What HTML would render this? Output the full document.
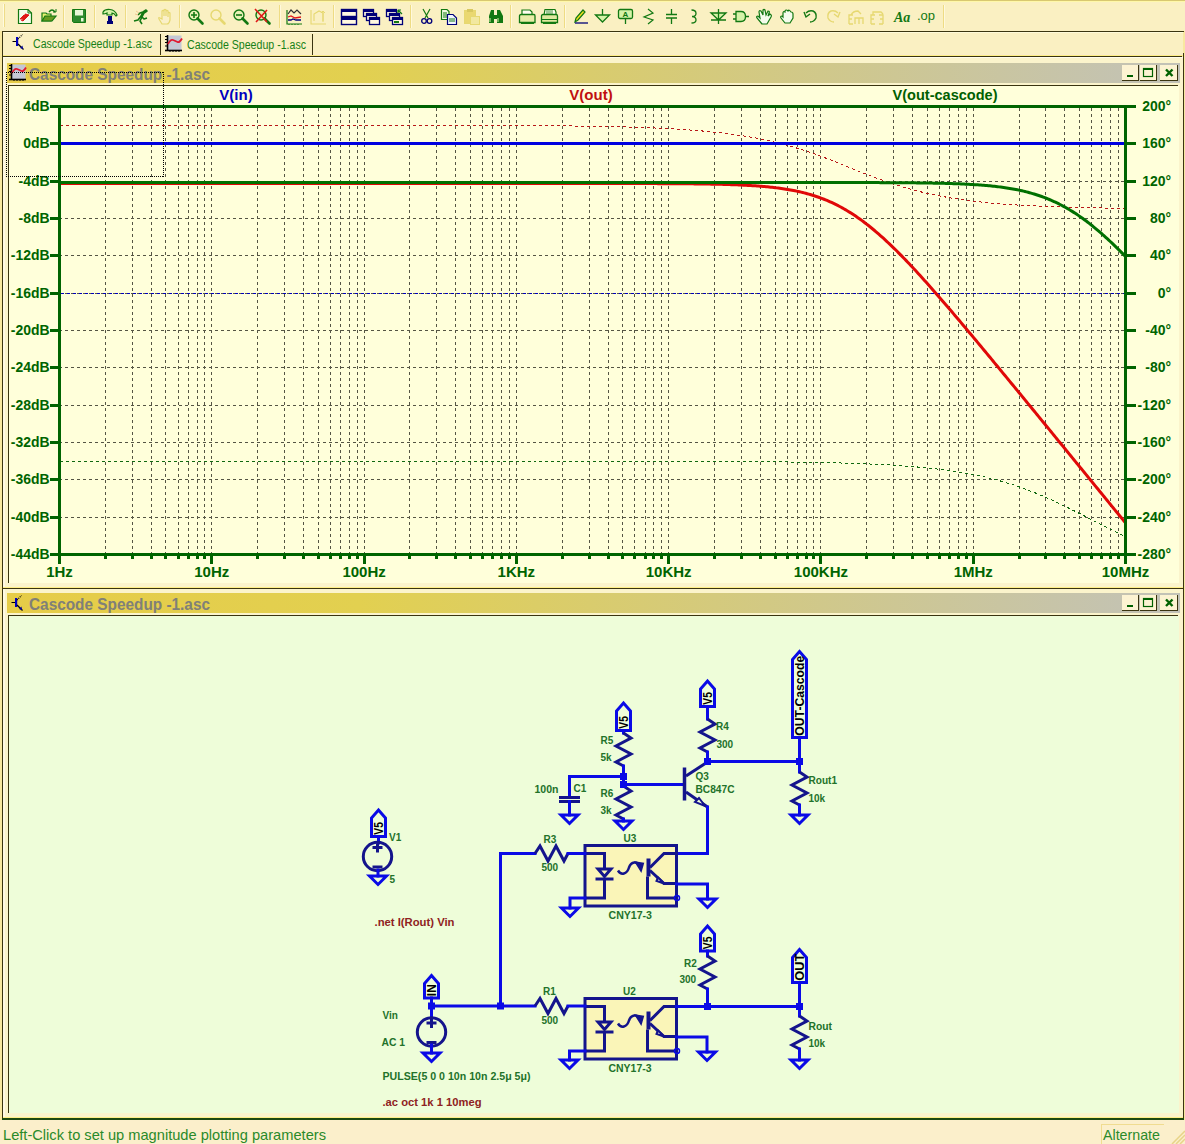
<!DOCTYPE html>
<html><head><meta charset="utf-8"><style>
html,body{margin:0;padding:0;overflow:hidden;background:#FBEFCB;}
svg{display:block;font-family:"Liberation Sans",sans-serif;}
</style></head><body>
<svg width="1185" height="1144" viewBox="0 0 1185 1144">
<defs>
<linearGradient id="tg" x1="0" x2="1" y1="0" y2="0">
<stop offset="0" stop-color="#E6CC48"/>
<stop offset="0.3" stop-color="#E2D050"/>
<stop offset="1" stop-color="#C2C2B8"/>
</linearGradient>
</defs>
<rect x="0" y="0" width="1185" height="1144" fill="#FBEFCB" />
<rect x="0" y="0" width="1185" height="31" fill="#FAF0C2" />
<rect x="0" y="0" width="1185" height="1" fill="#D8C870" />
<rect x="0" y="1" width="1185" height="1" fill="#FFF8A8" />
<rect x="3" y="4" width="1" height="23" fill="#FFFBE0" />
<rect x="4" y="4" width="1" height="23" fill="#EEDC88" />
<rect x="0" y="31" width="1185" height="1089" fill="#F8E8A0" />
<rect x="2" y="31" width="1182" height="1" fill="#3A3410" />
<rect x="2" y="31" width="1" height="1089" fill="#3A3410" />
<rect x="3" y="32" width="1180" height="24" fill="#FAF0C2" />
<rect x="3" y="54" width="1180" height="1" fill="#F8EACC" />
<rect x="3" y="55" width="1180" height="1" fill="#FFF088" />
<rect x="3" y="32" width="1180" height="1" fill="#FFFBDA" />
<rect x="2" y="56" width="1180" height="1" fill="#3A3410" />
<rect x="1183" y="53" width="1" height="1067" fill="#3A3410" />
<rect x="2" y="1118" width="1182" height="2" fill="#1E4A10" />
<rect x="3" y="57" width="1180" height="1061" fill="#FBF4CC" />
<rect x="3" y="57" width="2" height="1061" fill="#FFF9E4" />
<rect x="3" y="57" width="1180" height="1" fill="#FFFCEC" />
<rect x="3" y="587" width="1180" height="1" fill="#FFF088" />
<rect x="3" y="1117" width="1180" height="1" fill="#FFF088" />
<rect x="3" y="588" width="1180" height="1" fill="#3A3410" />
<rect x="7" y="63" width="1173" height="20" fill="url(#tg)"/>
<rect x="1122" y="65" width="17" height="16" fill="#FCF3D2" />
<rect x="1122" y="80" width="17" height="1" fill="#3A3410" />
<rect x="1138" y="65" width="1" height="16" fill="#3A3410" />
<rect x="1140" y="65" width="17" height="16" fill="#FCF3D2" />
<rect x="1140" y="80" width="17" height="1" fill="#3A3410" />
<rect x="1156" y="65" width="1" height="16" fill="#3A3410" />
<rect x="1160" y="65" width="18" height="16" fill="#FCF3D2" />
<rect x="1160" y="80" width="18" height="1" fill="#3A3410" />
<rect x="1177" y="65" width="1" height="16" fill="#3A3410" />
<rect x="1127" y="75" width="6" height="2" fill="#006000" />
<rect x="1143.5" y="68.5" width="9" height="8" fill="none" stroke="#006000" stroke-width="1.2"/>
<rect x="1143" y="68" width="10" height="2" fill="#006000" />
<path d="M1166 69.5 L1172.5 76 M1172.5 69.5 L1166 76" stroke="#006000" stroke-width="2.4"/>
<rect x="8" y="85" width="1170" height="1" fill="#3A3410" />
<rect x="8" y="85" width="1" height="498" fill="#3A3410" />
<rect x="9" y="86" width="1170" height="497" fill="#FFFFDA" />
<rect x="7" y="593" width="1173" height="20" fill="url(#tg)"/>
<rect x="1122" y="595" width="17" height="16" fill="#FCF3D2" />
<rect x="1122" y="610" width="17" height="1" fill="#3A3410" />
<rect x="1138" y="595" width="1" height="16" fill="#3A3410" />
<rect x="1140" y="595" width="17" height="16" fill="#FCF3D2" />
<rect x="1140" y="610" width="17" height="1" fill="#3A3410" />
<rect x="1156" y="595" width="1" height="16" fill="#3A3410" />
<rect x="1160" y="595" width="18" height="16" fill="#FCF3D2" />
<rect x="1160" y="610" width="18" height="1" fill="#3A3410" />
<rect x="1177" y="595" width="1" height="16" fill="#3A3410" />
<rect x="1127" y="605" width="6" height="2" fill="#006000" />
<rect x="1143.5" y="598.5" width="9" height="8" fill="none" stroke="#006000" stroke-width="1.2"/>
<rect x="1143" y="598" width="10" height="2" fill="#006000" />
<path d="M1166 599.5 L1172.5 606 M1172.5 599.5 L1166 606" stroke="#006000" stroke-width="2.4"/>
<rect x="8" y="615" width="1170" height="1" fill="#3A3410" />
<rect x="8" y="615" width="1" height="498" fill="#3A3410" />
<rect x="9" y="616" width="1170" height="497" fill="#EEFDD9" />
<text x="29" y="80" font-size="16" fill="#808078" font-weight="bold" text-anchor="start" textLength="181" lengthAdjust="spacingAndGlyphs" >Cascode Speedup -1.asc</text>
<text x="29" y="610" font-size="16" fill="#808078" font-weight="bold" text-anchor="start" textLength="181" lengthAdjust="spacingAndGlyphs" >Cascode Speedup -1.asc</text>
<text x="33" y="48" font-size="12" fill="#168016" font-weight="normal" text-anchor="start" textLength="119" lengthAdjust="spacingAndGlyphs" >Cascode Speedup -1.asc</text>
<rect x="160" y="34" width="1" height="21" fill="#3A3410" />
<text x="187" y="49" font-size="12" fill="#168016" font-weight="normal" text-anchor="start" textLength="119" lengthAdjust="spacingAndGlyphs" >Cascode Speedup -1.asc</text>
<rect x="312" y="34" width="1" height="21" fill="#3A3410" />
<g transform="translate(12,34)"><rect x="4" y="3" width="2.2" height="9" fill="#0000C0"/><path d="M0.5,7.5 H4" stroke="#000" stroke-width="1"/><path d="M6,5 L10.5,0.5" stroke="#000" stroke-width="1.2" stroke-dasharray="1 1"/><path d="M6,10 L11.5,15.5" stroke="#000" stroke-width="1.2"/><path d="M8,14 L10.5,11.5 L11,15 Z" fill="#0000A0"/></g>
<g transform="translate(165,35)"><rect x="2" y="0.5" width="14.5" height="15" fill="#C4C8D4"/><path d="M2.5,16 V0" stroke="#000" stroke-width="1.6"/><path d="M0,15.5 H17" stroke="#000" stroke-width="1.6"/><path d="M0,1.5 H2 M0,4.5 H2 M0,7.5 H2 M0,11 H2 M5,16 V17 M8,16 V17 M11,16 V17 M14,16 V17" stroke="#000" stroke-width="1"/><path d="M3,9 Q5.5,4 8,5 T12.5,7 T17,3.5" fill="none" stroke="#E01830" stroke-width="1.8"/></g>
<g transform="translate(9,64)"><rect x="2" y="0.5" width="14.5" height="15" fill="#C4C8D4"/><path d="M2.5,16 V0" stroke="#000" stroke-width="1.6"/><path d="M0,15.5 H17" stroke="#000" stroke-width="1.6"/><path d="M0,1.5 H2 M0,4.5 H2 M0,7.5 H2 M0,11 H2 M5,16 V17 M8,16 V17 M11,16 V17 M14,16 V17" stroke="#000" stroke-width="1"/><path d="M3,9 Q5.5,4 8,5 T12.5,7 T17,3.5" fill="none" stroke="#E01830" stroke-width="1.8"/></g>
<g transform="translate(11,595)"><rect x="4" y="3" width="2.2" height="9" fill="#0000C0"/><path d="M0.5,7.5 H4" stroke="#000" stroke-width="1"/><path d="M6,5 L10.5,0.5" stroke="#000" stroke-width="1.2" stroke-dasharray="1 1"/><path d="M6,10 L11.5,15.5" stroke="#000" stroke-width="1.2"/><path d="M8,14 L10.5,11.5 L11,15 Z" fill="#0000A0"/></g>
<text x="3" y="1140" font-size="14.5" fill="#2A8A2A" font-weight="normal" text-anchor="start" textLength="323" lengthAdjust="spacingAndGlyphs" >Left-Click to set up magnitude plotting parameters</text>
<rect x="1101" y="1124" width="63" height="1" fill="#F0DC90" />
<rect x="1101" y="1124" width="1" height="20" fill="#F0DC90" />
<text x="1103" y="1140" font-size="14.5" fill="#2A8A2A" font-weight="normal" text-anchor="start" textLength="57" lengthAdjust="spacingAndGlyphs" >Alternate</text>
<path d="M1172,1144 L1185,1131 M1176,1144 L1185,1135 M1180,1144 L1185,1139" stroke="#E8D488" stroke-width="1.5"/>
<path d="M105.5 108V553 M132.5 108V553 M151.5 108V553 M165.5 108V553 M178.5 108V553 M188.5 108V553 M197.5 108V553 M204.5 108V553 M211.5 108V553 M257.5 108V553 M284.5 108V553 M303.5 108V553 M318.5 108V553 M330.5 108V553 M340.5 108V553 M349.5 108V553 M357.5 108V553 M364.5 108V553 M409.5 108V553 M436.5 108V553 M455.5 108V553 M470.5 108V553 M482.5 108V553 M492.5 108V553 M501.5 108V553 M509.5 108V553 M516.5 108V553 M562.5 108V553 M589.5 108V553 M608.5 108V553 M622.5 108V553 M634.5 108V553 M645.5 108V553 M653.5 108V553 M661.5 108V553 M668.5 108V553 M714.5 108V553 M741.5 108V553 M760.5 108V553 M775.5 108V553 M787.5 108V553 M797.5 108V553 M806.5 108V553 M813.5 108V553 M820.5 108V553 M866.5 108V553 M893.5 108V553 M912.5 108V553 M927.5 108V553 M939.5 108V553 M949.5 108V553 M958.5 108V553 M966.5 108V553 M973.5 108V553 M1019.5 108V553 M1045.5 108V553 M1064.5 108V553 M1079.5 108V553 M1091.5 108V553 M1101.5 108V553 M1110.5 108V553 M1118.5 108V553 M1118.5 108V553 M1110.5 108V553 M1101.5 108V553 M59 143.5H1124 M59 181.5H1124 M59 218.5H1124 M59 255.5H1124 M59 293.5H1124 M59 330.5H1124 M59 367.5H1124 M59 405.5H1124 M59 442.5H1124 M59 479.5H1124 M59 517.5H1124" stroke="#555544" stroke-width="1" stroke-dasharray="3 3" fill="none"/>
<path d="M61 293.5H1124" stroke="#0000C0" stroke-width="1" stroke-dasharray="3 3"/>
<polyline points="59.50,125.17 61.02,125.17 62.55,125.17 64.07,125.17 65.59,125.17 67.11,125.17 68.64,125.17 70.16,125.17 71.68,125.17 73.21,125.17 74.73,125.17 76.25,125.17 77.77,125.17 79.30,125.17 80.82,125.17 82.34,125.17 83.87,125.17 85.39,125.17 86.91,125.17 88.43,125.17 89.96,125.17 91.48,125.17 93.00,125.17 94.53,125.17 96.05,125.17 97.57,125.17 99.09,125.17 100.62,125.17 102.14,125.17 103.66,125.17 105.19,125.17 106.71,125.17 108.23,125.17 109.75,125.17 111.28,125.17 112.80,125.17 114.32,125.17 115.85,125.17 117.37,125.17 118.89,125.17 120.41,125.17 121.94,125.17 123.46,125.17 124.98,125.17 126.51,125.17 128.03,125.17 129.55,125.17 131.07,125.17 132.60,125.17 134.12,125.17 135.64,125.17 137.17,125.17 138.69,125.17 140.21,125.17 141.73,125.17 143.26,125.17 144.78,125.17 146.30,125.17 147.83,125.17 149.35,125.17 150.87,125.17 152.39,125.17 153.92,125.17 155.44,125.17 156.96,125.17 158.49,125.17 160.01,125.17 161.53,125.17 163.05,125.17 164.58,125.17 166.10,125.17 167.62,125.17 169.15,125.17 170.67,125.17 172.19,125.17 173.71,125.17 175.24,125.17 176.76,125.17 178.28,125.17 179.81,125.17 181.33,125.17 182.85,125.17 184.37,125.17 185.90,125.17 187.42,125.17 188.94,125.17 190.47,125.17 191.99,125.17 193.51,125.17 195.03,125.17 196.56,125.17 198.08,125.17 199.60,125.17 201.13,125.17 202.65,125.17 204.17,125.17 205.69,125.17 207.22,125.17 208.74,125.17 210.26,125.17 211.79,125.17 213.31,125.17 214.83,125.17 216.35,125.17 217.88,125.17 219.40,125.17 220.92,125.17 222.45,125.17 223.97,125.17 225.49,125.17 227.01,125.17 228.54,125.17 230.06,125.17 231.58,125.17 233.11,125.17 234.63,125.17 236.15,125.17 237.67,125.17 239.20,125.17 240.72,125.17 242.24,125.17 243.77,125.17 245.29,125.17 246.81,125.17 248.33,125.17 249.86,125.17 251.38,125.17 252.90,125.17 254.43,125.17 255.95,125.17 257.47,125.17 258.99,125.17 260.52,125.17 262.04,125.17 263.56,125.17 265.09,125.17 266.61,125.17 268.13,125.17 269.65,125.18 271.18,125.18 272.70,125.18 274.22,125.18 275.75,125.18 277.27,125.18 278.79,125.18 280.31,125.18 281.84,125.18 283.36,125.18 284.88,125.18 286.41,125.18 287.93,125.18 289.45,125.18 290.97,125.18 292.50,125.18 294.02,125.18 295.54,125.18 297.07,125.18 298.59,125.18 300.11,125.18 301.63,125.18 303.16,125.18 304.68,125.18 306.20,125.18 307.73,125.18 309.25,125.18 310.77,125.18 312.29,125.18 313.82,125.18 315.34,125.18 316.86,125.18 318.39,125.18 319.91,125.18 321.43,125.19 322.95,125.19 324.48,125.19 326.00,125.19 327.52,125.19 329.05,125.19 330.57,125.19 332.09,125.19 333.61,125.19 335.14,125.19 336.66,125.19 338.18,125.19 339.71,125.19 341.23,125.19 342.75,125.19 344.27,125.19 345.80,125.19 347.32,125.19 348.84,125.19 350.37,125.20 351.89,125.20 353.41,125.20 354.93,125.20 356.46,125.20 357.98,125.20 359.50,125.20 361.03,125.20 362.55,125.20 364.07,125.20 365.59,125.20 367.12,125.20 368.64,125.20 370.16,125.21 371.69,125.21 373.21,125.21 374.73,125.21 376.25,125.21 377.78,125.21 379.30,125.21 380.82,125.21 382.35,125.21 383.87,125.21 385.39,125.22 386.91,125.22 388.44,125.22 389.96,125.22 391.48,125.22 393.01,125.22 394.53,125.22 396.05,125.22 397.57,125.23 399.10,125.23 400.62,125.23 402.14,125.23 403.67,125.23 405.19,125.23 406.71,125.23 408.23,125.24 409.76,125.24 411.28,125.24 412.80,125.24 414.33,125.24 415.85,125.24 417.37,125.25 418.89,125.25 420.42,125.25 421.94,125.25 423.46,125.25 424.99,125.26 426.51,125.26 428.03,125.26 429.55,125.26 431.08,125.26 432.60,125.27 434.12,125.27 435.65,125.27 437.17,125.27 438.69,125.28 440.21,125.28 441.74,125.28 443.26,125.28 444.78,125.29 446.31,125.29 447.83,125.29 449.35,125.29 450.87,125.30 452.40,125.30 453.92,125.30 455.44,125.31 456.97,125.31 458.49,125.31 460.01,125.32 461.53,125.32 463.06,125.32 464.58,125.33 466.10,125.33 467.63,125.34 469.15,125.34 470.67,125.34 472.19,125.35 473.72,125.35 475.24,125.36 476.76,125.36 478.29,125.36 479.81,125.37 481.33,125.37 482.85,125.38 484.38,125.38 485.90,125.39 487.42,125.39 488.95,125.40 490.47,125.40 491.99,125.41 493.51,125.42 495.04,125.42 496.56,125.43 498.08,125.43 499.61,125.44 501.13,125.45 502.65,125.45 504.17,125.46 505.70,125.47 507.22,125.47 508.74,125.48 510.27,125.49 511.79,125.49 513.31,125.50 514.83,125.51 516.36,125.52 517.88,125.53 519.40,125.54 520.93,125.54 522.45,125.55 523.97,125.56 525.49,125.57 527.02,125.58 528.54,125.59 530.06,125.60 531.59,125.61 533.11,125.62 534.63,125.63 536.15,125.64 537.68,125.65 539.20,125.66 540.72,125.68 542.25,125.69 543.77,125.70 545.29,125.71 546.81,125.72 548.34,125.74 549.86,125.75 551.38,125.76 552.91,125.78 554.43,125.79 555.95,125.81 557.47,125.82 559.00,125.84 560.52,125.85 562.04,125.87 563.57,125.88 565.09,125.90 566.61,125.92 568.13,125.94 569.66,125.95 571.18,125.97 572.70,125.99 574.23,126.01 575.75,126.03 577.27,126.05 578.79,126.07 580.32,126.09 581.84,126.11 583.36,126.14 584.89,126.16 586.41,126.18 587.93,126.20 589.45,126.23 590.98,126.25 592.50,126.28 594.02,126.30 595.55,126.33 597.07,126.36 598.59,126.39 600.11,126.41 601.64,126.44 603.16,126.47 604.68,126.50 606.21,126.54 607.73,126.57 609.25,126.60 610.77,126.63 612.30,126.67 613.82,126.70 615.34,126.74 616.87,126.77 618.39,126.81 619.91,126.85 621.43,126.89 622.96,126.93 624.48,126.97 626.00,127.01 627.53,127.06 629.05,127.10 630.57,127.14 632.09,127.19 633.62,127.24 635.14,127.29 636.66,127.33 638.19,127.39 639.71,127.44 641.23,127.49 642.75,127.54 644.28,127.60 645.80,127.66 647.32,127.71 648.85,127.77 650.37,127.83 651.89,127.90 653.41,127.96 654.94,128.02 656.46,128.09 657.98,128.16 659.51,128.23 661.03,128.30 662.55,128.37 664.07,128.45 665.60,128.52 667.12,128.60 668.64,128.68 670.17,128.76 671.69,128.84 673.21,128.93 674.73,129.02 676.26,129.11 677.78,129.20 679.30,129.29 680.83,129.39 682.35,129.49 683.87,129.59 685.39,129.69 686.92,129.79 688.44,129.90 689.96,130.01 691.49,130.12 693.01,130.24 694.53,130.35 696.05,130.47 697.58,130.60 699.10,130.72 700.62,130.85 702.15,130.98 703.67,131.12 705.19,131.25 706.71,131.39 708.24,131.54 709.76,131.69 711.28,131.84 712.81,131.99 714.33,132.15 715.85,132.31 717.37,132.47 718.90,132.64 720.42,132.81 721.94,132.99 723.47,133.17 724.99,133.35 726.51,133.54 728.03,133.73 729.56,133.92 731.08,134.12 732.60,134.33 734.13,134.54 735.65,134.75 737.17,134.97 738.69,135.19 740.22,135.42 741.74,135.65 743.26,135.89 744.79,136.14 746.31,136.38 747.83,136.64 749.35,136.90 750.88,137.16 752.40,137.43 753.92,137.71 755.45,137.99 756.97,138.27 758.49,138.57 760.01,138.87 761.54,139.17 763.06,139.48 764.58,139.80 766.11,140.12 767.63,140.45 769.15,140.79 770.67,141.13 772.20,141.48 773.72,141.84 775.24,142.20 776.77,142.57 778.29,142.94 779.81,143.33 781.33,143.72 782.86,144.12 784.38,144.52 785.90,144.93 787.43,145.35 788.95,145.77 790.47,146.21 791.99,146.65 793.52,147.09 795.04,147.55 796.56,148.01 798.09,148.48 799.61,148.95 801.13,149.43 802.65,149.92 804.18,150.42 805.70,150.92 807.22,151.43 808.75,151.94 810.27,152.46 811.79,152.99 813.31,153.53 814.84,154.07 816.36,154.61 817.88,155.16 819.41,155.72 820.93,156.28 822.45,156.85 823.97,157.43 825.50,158.00 827.02,158.59 828.54,159.17 830.07,159.76 831.59,160.36 833.11,160.95 834.63,161.55 836.16,162.16 837.68,162.76 839.20,163.37 840.73,163.98 842.25,164.59 843.77,165.21 845.29,165.82 846.82,166.44 848.34,167.05 849.86,167.67 851.39,168.28 852.91,168.90 854.43,169.51 855.95,170.13 857.48,170.74 859.00,171.35 860.52,171.95 862.05,172.56 863.57,173.16 865.09,173.76 866.61,174.35 868.14,174.94 869.66,175.53 871.18,176.12 872.71,176.70 874.23,177.27 875.75,177.84 877.27,178.40 878.80,178.96 880.32,179.52 881.84,180.07 883.37,180.61 884.89,181.15 886.41,181.68 887.93,182.20 889.46,182.72 890.98,183.23 892.50,183.73 894.03,184.23 895.55,184.72 897.07,185.21 898.59,185.68 900.12,186.15 901.64,186.62 903.16,187.07 904.69,187.52 906.21,187.96 907.73,188.40 909.25,188.83 910.78,189.25 912.30,189.66 913.82,190.07 915.35,190.47 916.87,190.86 918.39,191.25 919.91,191.63 921.44,192.00 922.96,192.36 924.48,192.72 926.01,193.07 927.53,193.42 929.05,193.76 930.57,194.09 932.10,194.42 933.62,194.74 935.14,195.05 936.67,195.36 938.19,195.66 939.71,195.95 941.23,196.24 942.76,196.52 944.28,196.80 945.80,197.07 947.33,197.34 948.85,197.60 950.37,197.86 951.89,198.11 953.42,198.35 954.94,198.59 956.46,198.83 957.99,199.06 959.51,199.28 961.03,199.50 962.55,199.72 964.08,199.93 965.60,200.13 967.12,200.34 968.65,200.53 970.17,200.73 971.69,200.92 973.21,201.10 974.74,201.28 976.26,201.46 977.78,201.63 979.31,201.80 980.83,201.97 982.35,202.13 983.87,202.29 985.40,202.44 986.92,202.59 988.44,202.74 989.97,202.89 991.49,203.03 993.01,203.17 994.53,203.30 996.06,203.43 997.58,203.56 999.10,203.69 1000.63,203.81 1002.15,203.94 1003.67,204.05 1005.19,204.17 1006.72,204.28 1008.24,204.39 1009.76,204.50 1011.29,204.61 1012.81,204.71 1014.33,204.81 1015.85,204.91 1017.38,205.01 1018.90,205.10 1020.42,205.19 1021.95,205.28 1023.47,205.37 1024.99,205.46 1026.51,205.54 1028.04,205.62 1029.56,205.70 1031.08,205.78 1032.61,205.86 1034.13,205.93 1035.65,206.01 1037.17,206.08 1038.70,206.15 1040.22,206.22 1041.74,206.29 1043.27,206.35 1044.79,206.41 1046.31,206.48 1047.83,206.54 1049.36,206.60 1050.88,206.66 1052.40,206.71 1053.93,206.77 1055.45,206.82 1056.97,206.88 1058.49,206.93 1060.02,206.98 1061.54,207.03 1063.06,207.08 1064.59,207.13 1066.11,207.17 1067.63,207.22 1069.15,207.26 1070.68,207.31 1072.20,207.35 1073.72,207.39 1075.25,207.43 1076.77,207.47 1078.29,207.51 1079.81,207.55 1081.34,207.58 1082.86,207.62 1084.38,207.65 1085.91,207.69 1087.43,207.72 1088.95,207.75 1090.47,207.79 1092.00,207.82 1093.52,207.85 1095.04,207.88 1096.57,207.91 1098.09,207.94 1099.61,207.96 1101.13,207.99 1102.66,208.02 1104.18,208.04 1105.70,208.07 1107.23,208.10 1108.75,208.12 1110.27,208.14 1111.79,208.17 1113.32,208.19 1114.84,208.21 1116.36,208.23 1117.89,208.25 1119.41,208.28 1120.93,208.30 1122.45,208.32 1123.98,208.33 1125.50,208.35" fill="none" stroke="#B81818" stroke-width="1" stroke-dasharray="3 3" shape-rendering="crispEdges" stroke-linejoin="round"/>
<polyline points="59.50,461.17 61.02,461.17 62.55,461.17 64.07,461.17 65.59,461.17 67.11,461.17 68.64,461.17 70.16,461.17 71.68,461.17 73.21,461.17 74.73,461.17 76.25,461.17 77.77,461.17 79.30,461.17 80.82,461.17 82.34,461.17 83.87,461.17 85.39,461.17 86.91,461.17 88.43,461.17 89.96,461.17 91.48,461.17 93.00,461.17 94.53,461.17 96.05,461.17 97.57,461.17 99.09,461.17 100.62,461.17 102.14,461.17 103.66,461.17 105.19,461.17 106.71,461.17 108.23,461.17 109.75,461.17 111.28,461.17 112.80,461.17 114.32,461.17 115.85,461.17 117.37,461.17 118.89,461.17 120.41,461.17 121.94,461.17 123.46,461.17 124.98,461.17 126.51,461.17 128.03,461.17 129.55,461.17 131.07,461.17 132.60,461.17 134.12,461.17 135.64,461.17 137.17,461.17 138.69,461.17 140.21,461.17 141.73,461.17 143.26,461.17 144.78,461.17 146.30,461.17 147.83,461.17 149.35,461.17 150.87,461.17 152.39,461.17 153.92,461.17 155.44,461.17 156.96,461.17 158.49,461.17 160.01,461.17 161.53,461.17 163.05,461.17 164.58,461.17 166.10,461.17 167.62,461.17 169.15,461.17 170.67,461.17 172.19,461.17 173.71,461.17 175.24,461.17 176.76,461.17 178.28,461.17 179.81,461.17 181.33,461.17 182.85,461.17 184.37,461.17 185.90,461.17 187.42,461.17 188.94,461.17 190.47,461.17 191.99,461.17 193.51,461.17 195.03,461.17 196.56,461.17 198.08,461.17 199.60,461.17 201.13,461.17 202.65,461.17 204.17,461.17 205.69,461.17 207.22,461.17 208.74,461.17 210.26,461.17 211.79,461.17 213.31,461.17 214.83,461.17 216.35,461.17 217.88,461.17 219.40,461.17 220.92,461.17 222.45,461.17 223.97,461.17 225.49,461.17 227.01,461.17 228.54,461.17 230.06,461.17 231.58,461.17 233.11,461.17 234.63,461.17 236.15,461.17 237.67,461.17 239.20,461.17 240.72,461.17 242.24,461.17 243.77,461.17 245.29,461.17 246.81,461.17 248.33,461.17 249.86,461.17 251.38,461.17 252.90,461.17 254.43,461.17 255.95,461.17 257.47,461.17 258.99,461.17 260.52,461.17 262.04,461.17 263.56,461.17 265.09,461.17 266.61,461.17 268.13,461.17 269.65,461.17 271.18,461.17 272.70,461.17 274.22,461.17 275.75,461.17 277.27,461.17 278.79,461.17 280.31,461.17 281.84,461.17 283.36,461.17 284.88,461.17 286.41,461.17 287.93,461.17 289.45,461.17 290.97,461.17 292.50,461.17 294.02,461.17 295.54,461.17 297.07,461.17 298.59,461.17 300.11,461.17 301.63,461.17 303.16,461.17 304.68,461.17 306.20,461.17 307.73,461.17 309.25,461.17 310.77,461.17 312.29,461.17 313.82,461.17 315.34,461.17 316.86,461.17 318.39,461.17 319.91,461.17 321.43,461.17 322.95,461.17 324.48,461.17 326.00,461.17 327.52,461.17 329.05,461.17 330.57,461.17 332.09,461.17 333.61,461.17 335.14,461.17 336.66,461.17 338.18,461.17 339.71,461.17 341.23,461.17 342.75,461.17 344.27,461.17 345.80,461.17 347.32,461.17 348.84,461.17 350.37,461.17 351.89,461.17 353.41,461.17 354.93,461.17 356.46,461.17 357.98,461.17 359.50,461.17 361.03,461.17 362.55,461.17 364.07,461.17 365.59,461.17 367.12,461.17 368.64,461.17 370.16,461.17 371.69,461.17 373.21,461.17 374.73,461.17 376.25,461.17 377.78,461.17 379.30,461.17 380.82,461.17 382.35,461.17 383.87,461.17 385.39,461.17 386.91,461.17 388.44,461.17 389.96,461.17 391.48,461.17 393.01,461.17 394.53,461.17 396.05,461.17 397.57,461.17 399.10,461.17 400.62,461.17 402.14,461.17 403.67,461.17 405.19,461.17 406.71,461.17 408.23,461.17 409.76,461.17 411.28,461.17 412.80,461.17 414.33,461.17 415.85,461.17 417.37,461.17 418.89,461.17 420.42,461.17 421.94,461.17 423.46,461.17 424.99,461.17 426.51,461.17 428.03,461.17 429.55,461.17 431.08,461.17 432.60,461.17 434.12,461.17 435.65,461.17 437.17,461.17 438.69,461.17 440.21,461.17 441.74,461.17 443.26,461.17 444.78,461.17 446.31,461.17 447.83,461.17 449.35,461.17 450.87,461.17 452.40,461.17 453.92,461.17 455.44,461.17 456.97,461.17 458.49,461.17 460.01,461.17 461.53,461.17 463.06,461.17 464.58,461.17 466.10,461.17 467.63,461.17 469.15,461.17 470.67,461.17 472.19,461.17 473.72,461.17 475.24,461.17 476.76,461.17 478.29,461.17 479.81,461.17 481.33,461.17 482.85,461.17 484.38,461.18 485.90,461.18 487.42,461.18 488.95,461.18 490.47,461.18 491.99,461.18 493.51,461.18 495.04,461.18 496.56,461.18 498.08,461.18 499.61,461.18 501.13,461.18 502.65,461.18 504.17,461.18 505.70,461.18 507.22,461.18 508.74,461.18 510.27,461.18 511.79,461.18 513.31,461.18 514.83,461.18 516.36,461.18 517.88,461.18 519.40,461.18 520.93,461.18 522.45,461.18 523.97,461.18 525.49,461.18 527.02,461.18 528.54,461.18 530.06,461.18 531.59,461.18 533.11,461.18 534.63,461.18 536.15,461.18 537.68,461.19 539.20,461.19 540.72,461.19 542.25,461.19 543.77,461.19 545.29,461.19 546.81,461.19 548.34,461.19 549.86,461.19 551.38,461.19 552.91,461.19 554.43,461.19 555.95,461.19 557.47,461.19 559.00,461.19 560.52,461.19 562.04,461.19 563.57,461.19 565.09,461.20 566.61,461.20 568.13,461.20 569.66,461.20 571.18,461.20 572.70,461.20 574.23,461.20 575.75,461.20 577.27,461.20 578.79,461.20 580.32,461.20 581.84,461.20 583.36,461.20 584.89,461.20 586.41,461.21 587.93,461.21 589.45,461.21 590.98,461.21 592.50,461.21 594.02,461.21 595.55,461.21 597.07,461.21 598.59,461.21 600.11,461.21 601.64,461.22 603.16,461.22 604.68,461.22 606.21,461.22 607.73,461.22 609.25,461.22 610.77,461.22 612.30,461.22 613.82,461.23 615.34,461.23 616.87,461.23 618.39,461.23 619.91,461.23 621.43,461.23 622.96,461.23 624.48,461.24 626.00,461.24 627.53,461.24 629.05,461.24 630.57,461.24 632.09,461.24 633.62,461.25 635.14,461.25 636.66,461.25 638.19,461.25 639.71,461.25 641.23,461.26 642.75,461.26 644.28,461.26 645.80,461.26 647.32,461.27 648.85,461.27 650.37,461.27 651.89,461.27 653.41,461.27 654.94,461.28 656.46,461.28 657.98,461.28 659.51,461.29 661.03,461.29 662.55,461.29 664.07,461.29 665.60,461.30 667.12,461.30 668.64,461.30 670.17,461.31 671.69,461.31 673.21,461.31 674.73,461.32 676.26,461.32 677.78,461.32 679.30,461.33 680.83,461.33 682.35,461.33 683.87,461.34 685.39,461.34 686.92,461.35 688.44,461.35 689.96,461.35 691.49,461.36 693.01,461.36 694.53,461.37 696.05,461.37 697.58,461.38 699.10,461.38 700.62,461.39 702.15,461.39 703.67,461.40 705.19,461.40 706.71,461.41 708.24,461.41 709.76,461.42 711.28,461.43 712.81,461.43 714.33,461.44 715.85,461.44 717.37,461.45 718.90,461.46 720.42,461.46 721.94,461.47 723.47,461.48 724.99,461.49 726.51,461.49 728.03,461.50 729.56,461.51 731.08,461.52 732.60,461.52 734.13,461.53 735.65,461.54 737.17,461.55 738.69,461.56 740.22,461.57 741.74,461.58 743.26,461.59 744.79,461.60 746.31,461.61 747.83,461.62 749.35,461.63 750.88,461.64 752.40,461.65 753.92,461.66 755.45,461.67 756.97,461.68 758.49,461.70 760.01,461.71 761.54,461.72 763.06,461.73 764.58,461.75 766.11,461.76 767.63,461.77 769.15,461.79 770.67,461.80 772.20,461.82 773.72,461.83 775.24,461.85 776.77,461.86 778.29,461.88 779.81,461.90 781.33,461.91 782.86,461.93 784.38,461.95 785.90,461.97 787.43,461.99 788.95,462.00 790.47,462.02 791.99,462.04 793.52,462.06 795.04,462.09 796.56,462.11 798.09,462.13 799.61,462.15 801.13,462.17 802.65,462.20 804.18,462.22 805.70,462.25 807.22,462.27 808.75,462.30 810.27,462.32 811.79,462.35 813.31,462.38 814.84,462.41 816.36,462.43 817.88,462.46 819.41,462.49 820.93,462.53 822.45,462.56 823.97,462.59 825.50,462.62 827.02,462.66 828.54,462.69 830.07,462.73 831.59,462.76 833.11,462.80 834.63,462.84 836.16,462.88 837.68,462.92 839.20,462.96 840.73,463.00 842.25,463.04 843.77,463.09 845.29,463.13 846.82,463.18 848.34,463.22 849.86,463.27 851.39,463.32 852.91,463.37 854.43,463.42 855.95,463.47 857.48,463.53 859.00,463.58 860.52,463.64 862.05,463.70 863.57,463.75 865.09,463.81 866.61,463.88 868.14,463.94 869.66,464.00 871.18,464.07 872.71,464.14 874.23,464.21 875.75,464.28 877.27,464.35 878.80,464.42 880.32,464.50 881.84,464.58 883.37,464.66 884.89,464.74 886.41,464.82 887.93,464.90 889.46,464.99 890.98,465.08 892.50,465.17 894.03,465.26 895.55,465.36 897.07,465.46 898.59,465.56 900.12,465.66 901.64,465.76 903.16,465.87 904.69,465.98 906.21,466.09 907.73,466.20 909.25,466.32 910.78,466.44 912.30,466.56 913.82,466.69 915.35,466.82 916.87,466.95 918.39,467.08 919.91,467.22 921.44,467.36 922.96,467.50 924.48,467.65 926.01,467.80 927.53,467.95 929.05,468.11 930.57,468.27 932.10,468.43 933.62,468.60 935.14,468.77 936.67,468.95 938.19,469.12 939.71,469.31 941.23,469.50 942.76,469.69 944.28,469.88 945.80,470.08 947.33,470.29 948.85,470.50 950.37,470.71 951.89,470.93 953.42,471.15 954.94,471.38 956.46,471.62 957.99,471.85 959.51,472.10 961.03,472.35 962.55,472.60 964.08,472.86 965.60,473.13 967.12,473.40 968.65,473.68 970.17,473.96 971.69,474.25 973.21,474.55 974.74,474.85 976.26,475.16 977.78,475.47 979.31,475.79 980.83,476.12 982.35,476.46 983.87,476.80 985.40,477.15 986.92,477.50 988.44,477.87 989.97,478.24 991.49,478.62 993.01,479.00 994.53,479.39 996.06,479.80 997.58,480.20 999.10,480.62 1000.63,481.04 1002.15,481.48 1003.67,481.92 1005.19,482.36 1006.72,482.82 1008.24,483.29 1009.76,483.76 1011.29,484.24 1012.81,484.73 1014.33,485.23 1015.85,485.74 1017.38,486.25 1018.90,486.77 1020.42,487.31 1021.95,487.85 1023.47,488.40 1024.99,488.95 1026.51,489.52 1028.04,490.09 1029.56,490.68 1031.08,491.27 1032.61,491.86 1034.13,492.47 1035.65,493.09 1037.17,493.71 1038.70,494.34 1040.22,494.98 1041.74,495.63 1043.27,496.28 1044.79,496.94 1046.31,497.61 1047.83,498.28 1049.36,498.96 1050.88,499.65 1052.40,500.35 1053.93,501.05 1055.45,501.75 1056.97,502.46 1058.49,503.18 1060.02,503.90 1061.54,504.63 1063.06,505.36 1064.59,506.10 1066.11,506.84 1067.63,507.59 1069.15,508.34 1070.68,509.09 1072.20,509.85 1073.72,510.60 1075.25,511.37 1076.77,512.13 1078.29,512.90 1079.81,513.66 1081.34,514.43 1082.86,515.20 1084.38,515.98 1085.91,516.75 1087.43,517.53 1088.95,518.30 1090.47,519.08 1092.00,519.86 1093.52,520.63 1095.04,521.41 1096.57,522.19 1098.09,522.96 1099.61,523.74 1101.13,524.52 1102.66,525.29 1104.18,526.07 1105.70,526.84 1107.23,527.61 1108.75,528.39 1110.27,529.16 1111.79,529.93 1113.32,530.71 1114.84,531.48 1116.36,532.25 1117.89,533.02 1119.41,533.79 1120.93,534.56 1122.45,535.33 1123.98,536.10 1125.50,536.87" fill="none" stroke="#106810" stroke-width="1" stroke-dasharray="3 3" shape-rendering="crispEdges" stroke-linejoin="round"/>
<rect x="61" y="142" width="1064" height="3" fill="#0000E0" />
<polyline points="59.50,183.50 61.02,183.50 62.55,183.50 64.07,183.50 65.59,183.50 67.11,183.50 68.64,183.50 70.16,183.50 71.68,183.50 73.21,183.50 74.73,183.50 76.25,183.50 77.77,183.50 79.30,183.50 80.82,183.50 82.34,183.50 83.87,183.50 85.39,183.50 86.91,183.50 88.43,183.50 89.96,183.50 91.48,183.50 93.00,183.50 94.53,183.50 96.05,183.50 97.57,183.50 99.09,183.50 100.62,183.50 102.14,183.50 103.66,183.50 105.19,183.50 106.71,183.50 108.23,183.50 109.75,183.50 111.28,183.50 112.80,183.50 114.32,183.50 115.85,183.50 117.37,183.50 118.89,183.50 120.41,183.50 121.94,183.50 123.46,183.50 124.98,183.50 126.51,183.50 128.03,183.50 129.55,183.50 131.07,183.50 132.60,183.50 134.12,183.50 135.64,183.50 137.17,183.50 138.69,183.50 140.21,183.50 141.73,183.50 143.26,183.50 144.78,183.50 146.30,183.50 147.83,183.50 149.35,183.50 150.87,183.50 152.39,183.50 153.92,183.50 155.44,183.50 156.96,183.50 158.49,183.50 160.01,183.50 161.53,183.50 163.05,183.50 164.58,183.50 166.10,183.50 167.62,183.50 169.15,183.50 170.67,183.50 172.19,183.50 173.71,183.50 175.24,183.50 176.76,183.50 178.28,183.50 179.81,183.50 181.33,183.50 182.85,183.50 184.37,183.50 185.90,183.50 187.42,183.50 188.94,183.50 190.47,183.50 191.99,183.50 193.51,183.50 195.03,183.50 196.56,183.50 198.08,183.50 199.60,183.50 201.13,183.50 202.65,183.50 204.17,183.50 205.69,183.50 207.22,183.50 208.74,183.50 210.26,183.50 211.79,183.50 213.31,183.50 214.83,183.50 216.35,183.50 217.88,183.50 219.40,183.50 220.92,183.50 222.45,183.50 223.97,183.50 225.49,183.50 227.01,183.50 228.54,183.50 230.06,183.50 231.58,183.50 233.11,183.50 234.63,183.50 236.15,183.50 237.67,183.50 239.20,183.50 240.72,183.50 242.24,183.50 243.77,183.50 245.29,183.50 246.81,183.50 248.33,183.50 249.86,183.50 251.38,183.50 252.90,183.50 254.43,183.50 255.95,183.50 257.47,183.50 258.99,183.50 260.52,183.50 262.04,183.50 263.56,183.50 265.09,183.50 266.61,183.50 268.13,183.50 269.65,183.50 271.18,183.50 272.70,183.50 274.22,183.50 275.75,183.50 277.27,183.50 278.79,183.50 280.31,183.50 281.84,183.50 283.36,183.50 284.88,183.50 286.41,183.50 287.93,183.50 289.45,183.50 290.97,183.50 292.50,183.50 294.02,183.50 295.54,183.50 297.07,183.50 298.59,183.50 300.11,183.50 301.63,183.50 303.16,183.50 304.68,183.50 306.20,183.50 307.73,183.50 309.25,183.50 310.77,183.50 312.29,183.50 313.82,183.50 315.34,183.50 316.86,183.50 318.39,183.50 319.91,183.50 321.43,183.50 322.95,183.50 324.48,183.50 326.00,183.50 327.52,183.50 329.05,183.50 330.57,183.50 332.09,183.50 333.61,183.50 335.14,183.50 336.66,183.50 338.18,183.50 339.71,183.50 341.23,183.50 342.75,183.50 344.27,183.50 345.80,183.50 347.32,183.50 348.84,183.50 350.37,183.50 351.89,183.50 353.41,183.50 354.93,183.50 356.46,183.50 357.98,183.50 359.50,183.50 361.03,183.50 362.55,183.50 364.07,183.50 365.59,183.50 367.12,183.50 368.64,183.50 370.16,183.50 371.69,183.50 373.21,183.50 374.73,183.50 376.25,183.50 377.78,183.50 379.30,183.50 380.82,183.50 382.35,183.50 383.87,183.50 385.39,183.50 386.91,183.50 388.44,183.50 389.96,183.50 391.48,183.50 393.01,183.50 394.53,183.50 396.05,183.50 397.57,183.50 399.10,183.50 400.62,183.50 402.14,183.50 403.67,183.50 405.19,183.50 406.71,183.50 408.23,183.50 409.76,183.50 411.28,183.50 412.80,183.50 414.33,183.50 415.85,183.50 417.37,183.50 418.89,183.50 420.42,183.50 421.94,183.50 423.46,183.50 424.99,183.50 426.51,183.50 428.03,183.50 429.55,183.50 431.08,183.50 432.60,183.50 434.12,183.50 435.65,183.50 437.17,183.50 438.69,183.50 440.21,183.50 441.74,183.50 443.26,183.50 444.78,183.50 446.31,183.50 447.83,183.50 449.35,183.50 450.87,183.50 452.40,183.50 453.92,183.50 455.44,183.50 456.97,183.50 458.49,183.50 460.01,183.50 461.53,183.50 463.06,183.50 464.58,183.50 466.10,183.50 467.63,183.50 469.15,183.50 470.67,183.50 472.19,183.50 473.72,183.50 475.24,183.50 476.76,183.50 478.29,183.50 479.81,183.50 481.33,183.50 482.85,183.50 484.38,183.50 485.90,183.50 487.42,183.50 488.95,183.50 490.47,183.50 491.99,183.50 493.51,183.50 495.04,183.50 496.56,183.50 498.08,183.50 499.61,183.50 501.13,183.50 502.65,183.50 504.17,183.50 505.70,183.50 507.22,183.50 508.74,183.50 510.27,183.50 511.79,183.50 513.31,183.50 514.83,183.50 516.36,183.50 517.88,183.50 519.40,183.50 520.93,183.50 522.45,183.50 523.97,183.50 525.49,183.50 527.02,183.50 528.54,183.50 530.06,183.50 531.59,183.50 533.11,183.50 534.63,183.50 536.15,183.50 537.68,183.50 539.20,183.50 540.72,183.50 542.25,183.50 543.77,183.50 545.29,183.50 546.81,183.50 548.34,183.50 549.86,183.50 551.38,183.51 552.91,183.51 554.43,183.51 555.95,183.51 557.47,183.51 559.00,183.51 560.52,183.51 562.04,183.51 563.57,183.51 565.09,183.51 566.61,183.51 568.13,183.51 569.66,183.51 571.18,183.51 572.70,183.51 574.23,183.51 575.75,183.51 577.27,183.51 578.79,183.51 580.32,183.51 581.84,183.51 583.36,183.51 584.89,183.51 586.41,183.51 587.93,183.52 589.45,183.52 590.98,183.52 592.50,183.52 594.02,183.52 595.55,183.52 597.07,183.52 598.59,183.52 600.11,183.52 601.64,183.52 603.16,183.52 604.68,183.53 606.21,183.53 607.73,183.53 609.25,183.53 610.77,183.53 612.30,183.53 613.82,183.53 615.34,183.53 616.87,183.54 618.39,183.54 619.91,183.54 621.43,183.54 622.96,183.54 624.48,183.55 626.00,183.55 627.53,183.55 629.05,183.55 630.57,183.56 632.09,183.56 633.62,183.56 635.14,183.56 636.66,183.57 638.19,183.57 639.71,183.57 641.23,183.58 642.75,183.58 644.28,183.58 645.80,183.59 647.32,183.59 648.85,183.60 650.37,183.60 651.89,183.61 653.41,183.61 654.94,183.62 656.46,183.62 657.98,183.63 659.51,183.63 661.03,183.64 662.55,183.65 664.07,183.65 665.60,183.66 667.12,183.67 668.64,183.68 670.17,183.68 671.69,183.69 673.21,183.70 674.73,183.71 676.26,183.72 677.78,183.73 679.30,183.74 680.83,183.75 682.35,183.76 683.87,183.78 685.39,183.79 686.92,183.80 688.44,183.82 689.96,183.83 691.49,183.85 693.01,183.86 694.53,183.88 696.05,183.90 697.58,183.92 699.10,183.94 700.62,183.96 702.15,183.98 703.67,184.00 705.19,184.03 706.71,184.05 708.24,184.08 709.76,184.10 711.28,184.13 712.81,184.16 714.33,184.19 715.85,184.22 717.37,184.26 718.90,184.29 720.42,184.33 721.94,184.37 723.47,184.41 724.99,184.45 726.51,184.50 728.03,184.54 729.56,184.59 731.08,184.64 732.60,184.70 734.13,184.75 735.65,184.81 737.17,184.87 738.69,184.93 740.22,185.00 741.74,185.07 743.26,185.14 744.79,185.22 746.31,185.30 747.83,185.38 749.35,185.47 750.88,185.56 752.40,185.65 753.92,185.75 755.45,185.85 756.97,185.96 758.49,186.07 760.01,186.19 761.54,186.31 763.06,186.44 764.58,186.57 766.11,186.71 767.63,186.86 769.15,187.01 770.67,187.17 772.20,187.33 773.72,187.50 775.24,187.68 776.77,187.87 778.29,188.07 779.81,188.27 781.33,188.48 782.86,188.70 784.38,188.93 785.90,189.17 787.43,189.42 788.95,189.67 790.47,189.94 791.99,190.22 793.52,190.51 795.04,190.82 796.56,191.13 798.09,191.46 799.61,191.80 801.13,192.15 802.65,192.51 804.18,192.89 805.70,193.29 807.22,193.69 808.75,194.12 810.27,194.56 811.79,195.01 813.31,195.48 814.84,195.96 816.36,196.47 817.88,196.99 819.41,197.52 820.93,198.08 822.45,198.65 823.97,199.24 825.50,199.85 827.02,200.48 828.54,201.13 830.07,201.80 831.59,202.49 833.11,203.20 834.63,203.92 836.16,204.67 837.68,205.44 839.20,206.23 840.73,207.05 842.25,207.88 843.77,208.73 845.29,209.61 846.82,210.51 848.34,211.42 849.86,212.36 851.39,213.33 852.91,214.31 854.43,215.31 855.95,216.34 857.48,217.39 859.00,218.45 860.52,219.54 862.05,220.65 863.57,221.78 865.09,222.93 866.61,224.11 868.14,225.30 869.66,226.51 871.18,227.74 872.71,228.99 874.23,230.26 875.75,231.54 877.27,232.85 878.80,234.17 880.32,235.51 881.84,236.87 883.37,238.24 884.89,239.64 886.41,241.04 887.93,242.47 889.46,243.90 890.98,245.36 892.50,246.83 894.03,248.31 895.55,249.80 897.07,251.31 898.59,252.84 900.12,254.37 901.64,255.92 903.16,257.48 904.69,259.05 906.21,260.64 907.73,262.23 909.25,263.83 910.78,265.45 912.30,267.07 913.82,268.71 915.35,270.35 916.87,272.00 918.39,273.66 919.91,275.33 921.44,277.01 922.96,278.69 924.48,280.38 926.01,282.08 927.53,283.79 929.05,285.50 930.57,287.22 932.10,288.95 933.62,290.68 935.14,292.41 936.67,294.16 938.19,295.90 939.71,297.66 941.23,299.41 942.76,301.18 944.28,302.94 945.80,304.71 947.33,306.49 948.85,308.27 950.37,310.05 951.89,311.84 953.42,313.63 954.94,315.42 956.46,317.21 957.99,319.01 959.51,320.82 961.03,322.62 962.55,324.43 964.08,326.24 965.60,328.05 967.12,329.87 968.65,331.68 970.17,333.50 971.69,335.32 973.21,337.15 974.74,338.97 976.26,340.80 977.78,342.63 979.31,344.46 980.83,346.29 982.35,348.13 983.87,349.96 985.40,351.80 986.92,353.64 988.44,355.48 989.97,357.32 991.49,359.16 993.01,361.00 994.53,362.84 996.06,364.69 997.58,366.53 999.10,368.38 1000.63,370.23 1002.15,372.08 1003.67,373.93 1005.19,375.78 1006.72,377.63 1008.24,379.48 1009.76,381.33 1011.29,383.18 1012.81,385.04 1014.33,386.89 1015.85,388.75 1017.38,390.60 1018.90,392.46 1020.42,394.31 1021.95,396.17 1023.47,398.03 1024.99,399.88 1026.51,401.74 1028.04,403.60 1029.56,405.46 1031.08,407.32 1032.61,409.18 1034.13,411.04 1035.65,412.90 1037.17,414.76 1038.70,416.62 1040.22,418.48 1041.74,420.34 1043.27,422.20 1044.79,424.06 1046.31,425.93 1047.83,427.79 1049.36,429.65 1050.88,431.51 1052.40,433.37 1053.93,435.24 1055.45,437.10 1056.97,438.96 1058.49,440.83 1060.02,442.69 1061.54,444.55 1063.06,446.42 1064.59,448.28 1066.11,450.15 1067.63,452.01 1069.15,453.87 1070.68,455.74 1072.20,457.60 1073.72,459.47 1075.25,461.33 1076.77,463.20 1078.29,465.06 1079.81,466.93 1081.34,468.79 1082.86,470.66 1084.38,472.52 1085.91,474.39 1087.43,476.25 1088.95,478.12 1090.47,479.98 1092.00,481.85 1093.52,483.71 1095.04,485.58 1096.57,487.44 1098.09,489.31 1099.61,491.18 1101.13,493.04 1102.66,494.91 1104.18,496.77 1105.70,498.64 1107.23,500.51 1108.75,502.37 1110.27,504.24 1111.79,506.10 1113.32,507.97 1114.84,509.84 1116.36,511.70 1117.89,513.57 1119.41,515.43 1120.93,517.30 1122.45,519.17 1123.98,521.03 1125.50,522.90" fill="none" stroke="#E00808" stroke-width="3" stroke-linejoin="round"/>
<polyline points="59.50,182.50 61.02,182.50 62.55,182.50 64.07,182.50 65.59,182.50 67.11,182.50 68.64,182.50 70.16,182.50 71.68,182.50 73.21,182.50 74.73,182.50 76.25,182.50 77.77,182.50 79.30,182.50 80.82,182.50 82.34,182.50 83.87,182.50 85.39,182.50 86.91,182.50 88.43,182.50 89.96,182.50 91.48,182.50 93.00,182.50 94.53,182.50 96.05,182.50 97.57,182.50 99.09,182.50 100.62,182.50 102.14,182.50 103.66,182.50 105.19,182.50 106.71,182.50 108.23,182.50 109.75,182.50 111.28,182.50 112.80,182.50 114.32,182.50 115.85,182.50 117.37,182.50 118.89,182.50 120.41,182.50 121.94,182.50 123.46,182.50 124.98,182.50 126.51,182.50 128.03,182.50 129.55,182.50 131.07,182.50 132.60,182.50 134.12,182.50 135.64,182.50 137.17,182.50 138.69,182.50 140.21,182.50 141.73,182.50 143.26,182.50 144.78,182.50 146.30,182.50 147.83,182.50 149.35,182.50 150.87,182.50 152.39,182.50 153.92,182.50 155.44,182.50 156.96,182.50 158.49,182.50 160.01,182.50 161.53,182.50 163.05,182.50 164.58,182.50 166.10,182.50 167.62,182.50 169.15,182.50 170.67,182.50 172.19,182.50 173.71,182.50 175.24,182.50 176.76,182.50 178.28,182.50 179.81,182.50 181.33,182.50 182.85,182.50 184.37,182.50 185.90,182.50 187.42,182.50 188.94,182.50 190.47,182.50 191.99,182.50 193.51,182.50 195.03,182.50 196.56,182.50 198.08,182.50 199.60,182.50 201.13,182.50 202.65,182.50 204.17,182.50 205.69,182.50 207.22,182.50 208.74,182.50 210.26,182.50 211.79,182.50 213.31,182.50 214.83,182.50 216.35,182.50 217.88,182.50 219.40,182.50 220.92,182.50 222.45,182.50 223.97,182.50 225.49,182.50 227.01,182.50 228.54,182.50 230.06,182.50 231.58,182.50 233.11,182.50 234.63,182.50 236.15,182.50 237.67,182.50 239.20,182.50 240.72,182.50 242.24,182.50 243.77,182.50 245.29,182.50 246.81,182.50 248.33,182.50 249.86,182.50 251.38,182.50 252.90,182.50 254.43,182.50 255.95,182.50 257.47,182.50 258.99,182.50 260.52,182.50 262.04,182.50 263.56,182.50 265.09,182.50 266.61,182.50 268.13,182.50 269.65,182.50 271.18,182.50 272.70,182.50 274.22,182.50 275.75,182.50 277.27,182.50 278.79,182.50 280.31,182.50 281.84,182.50 283.36,182.50 284.88,182.50 286.41,182.50 287.93,182.50 289.45,182.50 290.97,182.50 292.50,182.50 294.02,182.50 295.54,182.50 297.07,182.50 298.59,182.50 300.11,182.50 301.63,182.50 303.16,182.50 304.68,182.50 306.20,182.50 307.73,182.50 309.25,182.50 310.77,182.50 312.29,182.50 313.82,182.50 315.34,182.50 316.86,182.50 318.39,182.50 319.91,182.50 321.43,182.50 322.95,182.50 324.48,182.50 326.00,182.50 327.52,182.50 329.05,182.50 330.57,182.50 332.09,182.50 333.61,182.50 335.14,182.50 336.66,182.50 338.18,182.50 339.71,182.50 341.23,182.50 342.75,182.50 344.27,182.50 345.80,182.50 347.32,182.50 348.84,182.50 350.37,182.50 351.89,182.50 353.41,182.50 354.93,182.50 356.46,182.50 357.98,182.50 359.50,182.50 361.03,182.50 362.55,182.50 364.07,182.50 365.59,182.50 367.12,182.50 368.64,182.50 370.16,182.50 371.69,182.50 373.21,182.50 374.73,182.50 376.25,182.50 377.78,182.50 379.30,182.50 380.82,182.50 382.35,182.50 383.87,182.50 385.39,182.50 386.91,182.50 388.44,182.50 389.96,182.50 391.48,182.50 393.01,182.50 394.53,182.50 396.05,182.50 397.57,182.50 399.10,182.50 400.62,182.50 402.14,182.50 403.67,182.50 405.19,182.50 406.71,182.50 408.23,182.50 409.76,182.50 411.28,182.50 412.80,182.50 414.33,182.50 415.85,182.50 417.37,182.50 418.89,182.50 420.42,182.50 421.94,182.50 423.46,182.50 424.99,182.50 426.51,182.50 428.03,182.50 429.55,182.50 431.08,182.50 432.60,182.50 434.12,182.50 435.65,182.50 437.17,182.50 438.69,182.50 440.21,182.50 441.74,182.50 443.26,182.50 444.78,182.50 446.31,182.50 447.83,182.50 449.35,182.50 450.87,182.50 452.40,182.50 453.92,182.50 455.44,182.50 456.97,182.50 458.49,182.50 460.01,182.50 461.53,182.50 463.06,182.50 464.58,182.50 466.10,182.50 467.63,182.50 469.15,182.50 470.67,182.50 472.19,182.50 473.72,182.50 475.24,182.50 476.76,182.50 478.29,182.50 479.81,182.50 481.33,182.50 482.85,182.50 484.38,182.50 485.90,182.50 487.42,182.50 488.95,182.50 490.47,182.50 491.99,182.50 493.51,182.50 495.04,182.50 496.56,182.50 498.08,182.50 499.61,182.50 501.13,182.50 502.65,182.50 504.17,182.50 505.70,182.50 507.22,182.50 508.74,182.50 510.27,182.50 511.79,182.50 513.31,182.50 514.83,182.50 516.36,182.50 517.88,182.50 519.40,182.50 520.93,182.50 522.45,182.50 523.97,182.50 525.49,182.50 527.02,182.50 528.54,182.50 530.06,182.50 531.59,182.50 533.11,182.50 534.63,182.50 536.15,182.50 537.68,182.50 539.20,182.50 540.72,182.50 542.25,182.50 543.77,182.50 545.29,182.50 546.81,182.50 548.34,182.50 549.86,182.50 551.38,182.50 552.91,182.50 554.43,182.50 555.95,182.50 557.47,182.50 559.00,182.50 560.52,182.50 562.04,182.50 563.57,182.50 565.09,182.50 566.61,182.50 568.13,182.50 569.66,182.50 571.18,182.50 572.70,182.50 574.23,182.50 575.75,182.50 577.27,182.50 578.79,182.50 580.32,182.50 581.84,182.50 583.36,182.50 584.89,182.50 586.41,182.50 587.93,182.50 589.45,182.50 590.98,182.50 592.50,182.50 594.02,182.50 595.55,182.50 597.07,182.50 598.59,182.50 600.11,182.50 601.64,182.50 603.16,182.50 604.68,182.50 606.21,182.50 607.73,182.50 609.25,182.50 610.77,182.50 612.30,182.50 613.82,182.50 615.34,182.50 616.87,182.50 618.39,182.50 619.91,182.50 621.43,182.50 622.96,182.50 624.48,182.50 626.00,182.50 627.53,182.50 629.05,182.50 630.57,182.50 632.09,182.50 633.62,182.50 635.14,182.50 636.66,182.50 638.19,182.50 639.71,182.50 641.23,182.50 642.75,182.50 644.28,182.50 645.80,182.50 647.32,182.50 648.85,182.50 650.37,182.50 651.89,182.50 653.41,182.50 654.94,182.50 656.46,182.50 657.98,182.50 659.51,182.50 661.03,182.50 662.55,182.50 664.07,182.50 665.60,182.50 667.12,182.50 668.64,182.50 670.17,182.50 671.69,182.50 673.21,182.50 674.73,182.50 676.26,182.50 677.78,182.50 679.30,182.50 680.83,182.50 682.35,182.50 683.87,182.50 685.39,182.50 686.92,182.50 688.44,182.50 689.96,182.50 691.49,182.50 693.01,182.50 694.53,182.50 696.05,182.50 697.58,182.50 699.10,182.50 700.62,182.50 702.15,182.50 703.67,182.50 705.19,182.50 706.71,182.50 708.24,182.50 709.76,182.50 711.28,182.50 712.81,182.50 714.33,182.50 715.85,182.50 717.37,182.50 718.90,182.50 720.42,182.50 721.94,182.50 723.47,182.50 724.99,182.50 726.51,182.50 728.03,182.50 729.56,182.50 731.08,182.50 732.60,182.50 734.13,182.50 735.65,182.50 737.17,182.50 738.69,182.50 740.22,182.50 741.74,182.50 743.26,182.50 744.79,182.50 746.31,182.50 747.83,182.50 749.35,182.50 750.88,182.50 752.40,182.50 753.92,182.50 755.45,182.50 756.97,182.50 758.49,182.50 760.01,182.50 761.54,182.50 763.06,182.51 764.58,182.51 766.11,182.51 767.63,182.51 769.15,182.51 770.67,182.51 772.20,182.51 773.72,182.51 775.24,182.51 776.77,182.51 778.29,182.51 779.81,182.51 781.33,182.51 782.86,182.51 784.38,182.51 785.90,182.51 787.43,182.51 788.95,182.51 790.47,182.51 791.99,182.51 793.52,182.51 795.04,182.51 796.56,182.51 798.09,182.51 799.61,182.51 801.13,182.51 802.65,182.51 804.18,182.51 805.70,182.51 807.22,182.52 808.75,182.52 810.27,182.52 811.79,182.52 813.31,182.52 814.84,182.52 816.36,182.52 817.88,182.52 819.41,182.52 820.93,182.52 822.45,182.52 823.97,182.52 825.50,182.53 827.02,182.53 828.54,182.53 830.07,182.53 831.59,182.53 833.11,182.53 834.63,182.53 836.16,182.53 837.68,182.54 839.20,182.54 840.73,182.54 842.25,182.54 843.77,182.54 845.29,182.55 846.82,182.55 848.34,182.55 849.86,182.55 851.39,182.55 852.91,182.56 854.43,182.56 855.95,182.56 857.48,182.57 859.00,182.57 860.52,182.57 862.05,182.57 863.57,182.58 865.09,182.58 866.61,182.59 868.14,182.59 869.66,182.59 871.18,182.60 872.71,182.60 874.23,182.61 875.75,182.61 877.27,182.62 878.80,182.62 880.32,182.63 881.84,182.63 883.37,182.64 884.89,182.65 886.41,182.65 887.93,182.66 889.46,182.67 890.98,182.68 892.50,182.68 894.03,182.69 895.55,182.70 897.07,182.71 898.59,182.72 900.12,182.73 901.64,182.74 903.16,182.75 904.69,182.77 906.21,182.78 907.73,182.79 909.25,182.81 910.78,182.82 912.30,182.83 913.82,182.85 915.35,182.87 916.87,182.88 918.39,182.90 919.91,182.92 921.44,182.94 922.96,182.96 924.48,182.98 926.01,183.01 927.53,183.03 929.05,183.05 930.57,183.08 932.10,183.11 933.62,183.13 935.14,183.16 936.67,183.20 938.19,183.23 939.71,183.26 941.23,183.30 942.76,183.33 944.28,183.37 945.80,183.41 947.33,183.46 948.85,183.50 950.37,183.55 951.89,183.60 953.42,183.65 954.94,183.70 956.46,183.75 957.99,183.81 959.51,183.87 961.03,183.94 962.55,184.00 964.08,184.07 965.60,184.15 967.12,184.22 968.65,184.30 970.17,184.38 971.69,184.47 973.21,184.56 974.74,184.66 976.26,184.75 977.78,184.86 979.31,184.97 980.83,185.08 982.35,185.20 983.87,185.32 985.40,185.45 986.92,185.58 988.44,185.72 989.97,185.86 991.49,186.02 993.01,186.17 994.53,186.34 996.06,186.51 997.58,186.69 999.10,186.88 1000.63,187.07 1002.15,187.28 1003.67,187.49 1005.19,187.71 1006.72,187.94 1008.24,188.18 1009.76,188.43 1011.29,188.69 1012.81,188.96 1014.33,189.24 1015.85,189.53 1017.38,189.83 1018.90,190.14 1020.42,190.47 1021.95,190.81 1023.47,191.16 1024.99,191.53 1026.51,191.91 1028.04,192.30 1029.56,192.71 1031.08,193.13 1032.61,193.57 1034.13,194.03 1035.65,194.50 1037.17,194.98 1038.70,195.49 1040.22,196.01 1041.74,196.54 1043.27,197.10 1044.79,197.67 1046.31,198.27 1047.83,198.88 1049.36,199.51 1050.88,200.16 1052.40,200.83 1053.93,201.51 1055.45,202.22 1056.97,202.95 1058.49,203.70 1060.02,204.47 1061.54,205.26 1063.06,206.08 1064.59,206.91 1066.11,207.77 1067.63,208.64 1069.15,209.54 1070.68,210.46 1072.20,211.40 1073.72,212.36 1075.25,213.35 1076.77,214.35 1078.29,215.38 1079.81,216.43 1081.34,217.50 1082.86,218.59 1084.38,219.70 1085.91,220.83 1087.43,221.98 1088.95,223.15 1090.47,224.34 1092.00,225.55 1093.52,226.79 1095.04,228.04 1096.57,229.30 1098.09,230.59 1099.61,231.90 1101.13,233.22 1102.66,234.56 1104.18,235.92 1105.70,237.30 1107.23,238.69 1108.75,240.10 1110.27,241.52 1111.79,242.96 1113.32,244.41 1114.84,245.88 1116.36,247.37 1117.89,248.86 1119.41,250.37 1120.93,251.90 1122.45,253.43 1123.98,254.98 1125.50,256.54" fill="none" stroke="#007000" stroke-width="3" stroke-linejoin="round"/>
<rect x="58" y="105" width="3" height="459" fill="#006400" />
<rect x="1124" y="105" width="3" height="451" fill="#006400" />
<rect x="50" y="105" width="1086" height="3" fill="#006400" />
<rect x="50" y="553" width="1086" height="3" fill="#006400" />
<rect x="50" y="105" width="8" height="3" fill="#006400" />
<rect x="1127" y="105" width="9" height="3" fill="#006400" />
<text transform="translate(49.5,111) scale(0.93,1)" font-size="15" fill="#006400" font-weight="bold" text-anchor="end">4dB</text>
<text transform="translate(1171,111) scale(0.93,1)" font-size="15" fill="#006400" font-weight="bold" text-anchor="end">200°</text>
<rect x="50" y="142" width="8" height="3" fill="#006400" />
<rect x="1127" y="142" width="9" height="3" fill="#006400" />
<text transform="translate(49.5,148) scale(0.93,1)" font-size="15" fill="#006400" font-weight="bold" text-anchor="end">0dB</text>
<text transform="translate(1171,148) scale(0.93,1)" font-size="15" fill="#006400" font-weight="bold" text-anchor="end">160°</text>
<rect x="50" y="180" width="8" height="3" fill="#006400" />
<rect x="1127" y="180" width="9" height="3" fill="#006400" />
<text transform="translate(49.5,186) scale(0.93,1)" font-size="15" fill="#006400" font-weight="bold" text-anchor="end">-4dB</text>
<text transform="translate(1171,186) scale(0.93,1)" font-size="15" fill="#006400" font-weight="bold" text-anchor="end">120°</text>
<rect x="50" y="217" width="8" height="3" fill="#006400" />
<rect x="1127" y="217" width="9" height="3" fill="#006400" />
<text transform="translate(49.5,223) scale(0.93,1)" font-size="15" fill="#006400" font-weight="bold" text-anchor="end">-8dB</text>
<text transform="translate(1171,223) scale(0.93,1)" font-size="15" fill="#006400" font-weight="bold" text-anchor="end">80°</text>
<rect x="50" y="254" width="8" height="3" fill="#006400" />
<rect x="1127" y="254" width="9" height="3" fill="#006400" />
<text transform="translate(49.5,260) scale(0.93,1)" font-size="15" fill="#006400" font-weight="bold" text-anchor="end">-12dB</text>
<text transform="translate(1171,260) scale(0.93,1)" font-size="15" fill="#006400" font-weight="bold" text-anchor="end">40°</text>
<rect x="50" y="292" width="8" height="3" fill="#006400" />
<rect x="1127" y="292" width="9" height="3" fill="#006400" />
<text transform="translate(49.5,298) scale(0.93,1)" font-size="15" fill="#006400" font-weight="bold" text-anchor="end">-16dB</text>
<text transform="translate(1171,298) scale(0.93,1)" font-size="15" fill="#006400" font-weight="bold" text-anchor="end">0°</text>
<rect x="50" y="329" width="8" height="3" fill="#006400" />
<rect x="1127" y="329" width="9" height="3" fill="#006400" />
<text transform="translate(49.5,335) scale(0.93,1)" font-size="15" fill="#006400" font-weight="bold" text-anchor="end">-20dB</text>
<text transform="translate(1171,335) scale(0.93,1)" font-size="15" fill="#006400" font-weight="bold" text-anchor="end">-40°</text>
<rect x="50" y="366" width="8" height="3" fill="#006400" />
<rect x="1127" y="366" width="9" height="3" fill="#006400" />
<text transform="translate(49.5,372) scale(0.93,1)" font-size="15" fill="#006400" font-weight="bold" text-anchor="end">-24dB</text>
<text transform="translate(1171,372) scale(0.93,1)" font-size="15" fill="#006400" font-weight="bold" text-anchor="end">-80°</text>
<rect x="50" y="404" width="8" height="3" fill="#006400" />
<rect x="1127" y="404" width="9" height="3" fill="#006400" />
<text transform="translate(49.5,410) scale(0.93,1)" font-size="15" fill="#006400" font-weight="bold" text-anchor="end">-28dB</text>
<text transform="translate(1171,410) scale(0.93,1)" font-size="15" fill="#006400" font-weight="bold" text-anchor="end">-120°</text>
<rect x="50" y="441" width="8" height="3" fill="#006400" />
<rect x="1127" y="441" width="9" height="3" fill="#006400" />
<text transform="translate(49.5,447) scale(0.93,1)" font-size="15" fill="#006400" font-weight="bold" text-anchor="end">-32dB</text>
<text transform="translate(1171,447) scale(0.93,1)" font-size="15" fill="#006400" font-weight="bold" text-anchor="end">-160°</text>
<rect x="50" y="478" width="8" height="3" fill="#006400" />
<rect x="1127" y="478" width="9" height="3" fill="#006400" />
<text transform="translate(49.5,484) scale(0.93,1)" font-size="15" fill="#006400" font-weight="bold" text-anchor="end">-36dB</text>
<text transform="translate(1171,484) scale(0.93,1)" font-size="15" fill="#006400" font-weight="bold" text-anchor="end">-200°</text>
<rect x="50" y="516" width="8" height="3" fill="#006400" />
<rect x="1127" y="516" width="9" height="3" fill="#006400" />
<text transform="translate(49.5,522) scale(0.93,1)" font-size="15" fill="#006400" font-weight="bold" text-anchor="end">-40dB</text>
<text transform="translate(1171,522) scale(0.93,1)" font-size="15" fill="#006400" font-weight="bold" text-anchor="end">-240°</text>
<rect x="50" y="553" width="8" height="3" fill="#006400" />
<rect x="1127" y="553" width="9" height="3" fill="#006400" />
<text transform="translate(49.5,559) scale(0.93,1)" font-size="15" fill="#006400" font-weight="bold" text-anchor="end">-44dB</text>
<text transform="translate(1171,559) scale(0.93,1)" font-size="15" fill="#006400" font-weight="bold" text-anchor="end">-280°</text>
<rect x="58" y="556" width="3" height="8" fill="#006400" />
<rect x="104" y="556" width="3" height="3" fill="#006400" />
<rect x="131" y="556" width="3" height="3" fill="#006400" />
<rect x="150" y="556" width="3" height="3" fill="#006400" />
<rect x="164" y="556" width="3" height="3" fill="#006400" />
<rect x="177" y="556" width="3" height="3" fill="#006400" />
<rect x="187" y="556" width="3" height="3" fill="#006400" />
<rect x="196" y="556" width="3" height="3" fill="#006400" />
<rect x="203" y="556" width="3" height="3" fill="#006400" />
<rect x="210" y="556" width="3" height="8" fill="#006400" />
<rect x="256" y="556" width="3" height="3" fill="#006400" />
<rect x="283" y="556" width="3" height="3" fill="#006400" />
<rect x="302" y="556" width="3" height="3" fill="#006400" />
<rect x="317" y="556" width="3" height="3" fill="#006400" />
<rect x="329" y="556" width="3" height="3" fill="#006400" />
<rect x="339" y="556" width="3" height="3" fill="#006400" />
<rect x="348" y="556" width="3" height="3" fill="#006400" />
<rect x="356" y="556" width="3" height="3" fill="#006400" />
<rect x="363" y="556" width="3" height="8" fill="#006400" />
<rect x="408" y="556" width="3" height="3" fill="#006400" />
<rect x="435" y="556" width="3" height="3" fill="#006400" />
<rect x="454" y="556" width="3" height="3" fill="#006400" />
<rect x="469" y="556" width="3" height="3" fill="#006400" />
<rect x="481" y="556" width="3" height="3" fill="#006400" />
<rect x="491" y="556" width="3" height="3" fill="#006400" />
<rect x="500" y="556" width="3" height="3" fill="#006400" />
<rect x="508" y="556" width="3" height="3" fill="#006400" />
<rect x="515" y="556" width="3" height="8" fill="#006400" />
<rect x="561" y="556" width="3" height="3" fill="#006400" />
<rect x="588" y="556" width="3" height="3" fill="#006400" />
<rect x="607" y="556" width="3" height="3" fill="#006400" />
<rect x="621" y="556" width="3" height="3" fill="#006400" />
<rect x="633" y="556" width="3" height="3" fill="#006400" />
<rect x="644" y="556" width="3" height="3" fill="#006400" />
<rect x="652" y="556" width="3" height="3" fill="#006400" />
<rect x="660" y="556" width="3" height="3" fill="#006400" />
<rect x="667" y="556" width="3" height="8" fill="#006400" />
<rect x="713" y="556" width="3" height="3" fill="#006400" />
<rect x="740" y="556" width="3" height="3" fill="#006400" />
<rect x="759" y="556" width="3" height="3" fill="#006400" />
<rect x="774" y="556" width="3" height="3" fill="#006400" />
<rect x="786" y="556" width="3" height="3" fill="#006400" />
<rect x="796" y="556" width="3" height="3" fill="#006400" />
<rect x="805" y="556" width="3" height="3" fill="#006400" />
<rect x="812" y="556" width="3" height="3" fill="#006400" />
<rect x="819" y="556" width="3" height="8" fill="#006400" />
<rect x="865" y="556" width="3" height="3" fill="#006400" />
<rect x="892" y="556" width="3" height="3" fill="#006400" />
<rect x="911" y="556" width="3" height="3" fill="#006400" />
<rect x="926" y="556" width="3" height="3" fill="#006400" />
<rect x="938" y="556" width="3" height="3" fill="#006400" />
<rect x="948" y="556" width="3" height="3" fill="#006400" />
<rect x="957" y="556" width="3" height="3" fill="#006400" />
<rect x="965" y="556" width="3" height="3" fill="#006400" />
<rect x="972" y="556" width="3" height="8" fill="#006400" />
<rect x="1018" y="556" width="3" height="3" fill="#006400" />
<rect x="1044" y="556" width="3" height="3" fill="#006400" />
<rect x="1063" y="556" width="3" height="3" fill="#006400" />
<rect x="1078" y="556" width="3" height="3" fill="#006400" />
<rect x="1090" y="556" width="3" height="3" fill="#006400" />
<rect x="1100" y="556" width="3" height="3" fill="#006400" />
<rect x="1109" y="556" width="3" height="3" fill="#006400" />
<rect x="1117" y="556" width="3" height="3" fill="#006400" />
<rect x="1124" y="556" width="3" height="8" fill="#006400" />
<text x="59.5" y="577" font-size="15" fill="#006400" font-weight="bold" text-anchor="middle" >1Hz</text>
<text x="211.7857" y="577" font-size="15" fill="#006400" font-weight="bold" text-anchor="middle" >10Hz</text>
<text x="364.0714" y="577" font-size="15" fill="#006400" font-weight="bold" text-anchor="middle" >100Hz</text>
<text x="516.3571" y="577" font-size="15" fill="#006400" font-weight="bold" text-anchor="middle" >1KHz</text>
<text x="668.6428" y="577" font-size="15" fill="#006400" font-weight="bold" text-anchor="middle" >10KHz</text>
<text x="820.9285" y="577" font-size="15" fill="#006400" font-weight="bold" text-anchor="middle" >100KHz</text>
<text x="973.2141999999999" y="577" font-size="15" fill="#006400" font-weight="bold" text-anchor="middle" >1MHz</text>
<text x="1125.4999" y="577" font-size="15" fill="#006400" font-weight="bold" text-anchor="middle" >10MHz</text>
<text x="236" y="100" font-size="15" fill="#0000C0" font-weight="bold" text-anchor="middle" >V(in)</text>
<text x="591" y="100" font-size="15" fill="#C01010" font-weight="bold" text-anchor="middle" >V(out)</text>
<text x="945" y="100" font-size="15" fill="#006000" font-weight="bold" text-anchor="middle" textLength="105" lengthAdjust="spacingAndGlyphs" >V(out-cascode)</text>
<path d="M6 72.5H164M6 176.5H164M6.5 72V177M163.5 72V177" fill="none" stroke="#000" stroke-width="1" stroke-dasharray="1 1" shape-rendering="crispEdges"/>
<path d="M616.5,730.5 L616.5,711 L623.5,703 L630.5,711 L630.5,730.5 Z" fill="none" stroke="#0A0AE6" stroke-width="3" stroke-linejoin="miter"/>
<text transform="translate(627.5,728.7) rotate(-90)" font-size="12" font-weight="bold" fill="#000" textLength="12.6" lengthAdjust="spacingAndGlyphs">V5</text>
<path d="M623.5,730.5 L623.5,733" fill="none" stroke="#0A0AE6" stroke-width="3" stroke-linecap="square"/>
<path d="M623.5,733 L631.0,738 L616.0,746 L631.0,754 L616.0,762 L623.5,766" fill="none" stroke="#14148C" stroke-width="3" stroke-linecap="butt" stroke-linejoin="miter"/>
<path d="M623.5,766 L623.5,786" fill="none" stroke="#0A0AE6" stroke-width="3" stroke-linecap="square"/>
<path d="M623.5,786 L631.0,791 L616.0,799 L631.0,807 L616.0,815 L623.5,819" fill="none" stroke="#14148C" stroke-width="3" stroke-linecap="butt" stroke-linejoin="miter"/>
<path d="M623.5,819 L623.5,821" fill="none" stroke="#0A0AE6" stroke-width="3" stroke-linecap="square"/>
<path d="M615.0,821 L632.0,821 L623.5,829.5 Z" fill="none" stroke="#0A0AE6" stroke-width="3" stroke-linejoin="miter"/>
<rect x="620.0" y="773.0" width="7" height="7" fill="#0A0AE6"/>
<rect x="620.0" y="781.0" width="7" height="7" fill="#0A0AE6"/>
<path d="M623.5,776.5 L569.5,776.5 L569.5,797" fill="none" stroke="#0A0AE6" stroke-width="3" stroke-linecap="square"/>
<path d="M559,797.5 H580 M559,801.5 H580" fill="none" stroke="#14148C" stroke-width="3" stroke-linecap="butt" stroke-linejoin="miter"/>
<path d="M569.5,801.5 L569.5,815" fill="none" stroke="#0A0AE6" stroke-width="3" stroke-linecap="square"/>
<path d="M561.0,815 L578.0,815 L569.5,823.5 Z" fill="none" stroke="#0A0AE6" stroke-width="3" stroke-linejoin="miter"/>
<path d="M623.5,784.5 L684,784.5" fill="none" stroke="#0A0AE6" stroke-width="3" stroke-linecap="square"/>
<path d="M684.5,767.5 V800.5" fill="none" stroke="#14148C" stroke-width="3.5" stroke-linecap="butt" stroke-linejoin="miter"/>
<path d="M686,776 L707.5,762" fill="none" stroke="#14148C" stroke-width="3" stroke-linecap="butt" stroke-linejoin="miter"/>
<path d="M686,792 L707.5,807" fill="none" stroke="#14148C" stroke-width="3" stroke-linecap="butt" stroke-linejoin="miter"/>
<path d="M699,798 L695,802 L705,806 Z" fill="#EEFDD9" stroke="#14148C" stroke-width="2"/>
<path d="M700.5,706.5 L700.5,689 L707.5,681 L714.5,689 L714.5,706.5 Z" fill="none" stroke="#0A0AE6" stroke-width="3" stroke-linejoin="miter"/>
<text transform="translate(711.5,704.7) rotate(-90)" font-size="12" font-weight="bold" fill="#000" textLength="12.6" lengthAdjust="spacingAndGlyphs">V5</text>
<path d="M707.5,706.5 L707.5,719" fill="none" stroke="#0A0AE6" stroke-width="3" stroke-linecap="square"/>
<path d="M707.5,719 L715.0,724 L700.0,732 L715.0,740 L700.0,748 L707.5,752" fill="none" stroke="#14148C" stroke-width="3" stroke-linecap="butt" stroke-linejoin="miter"/>
<path d="M707.5,752 L707.5,761.5" fill="none" stroke="#0A0AE6" stroke-width="3" stroke-linecap="square"/>
<rect x="704.0" y="758.0" width="7" height="7" fill="#0A0AE6"/>
<path d="M707.5,761.5 L799.5,761.5" fill="none" stroke="#0A0AE6" stroke-width="3" stroke-linecap="square"/>
<rect x="796.0" y="758.0" width="7" height="7" fill="#0A0AE6"/>
<path d="M792.5,737.5 L792.5,659.5 L799.5,651.5 L806.5,659.5 L806.5,737.5 Z" fill="none" stroke="#0A0AE6" stroke-width="3" stroke-linejoin="miter"/>
<text transform="translate(803.5,735.7) rotate(-90)" font-size="12.5" font-weight="bold" fill="#000" textLength="80" lengthAdjust="spacingAndGlyphs">OUT-Cascode</text>
<path d="M799.5,737.5 L799.5,772" fill="none" stroke="#0A0AE6" stroke-width="3" stroke-linecap="square"/>
<path d="M799.5,772 L807.0,777 L792.0,785 L807.0,793 L792.0,801 L799.5,805" fill="none" stroke="#14148C" stroke-width="3" stroke-linecap="butt" stroke-linejoin="miter"/>
<path d="M799.5,805 L799.5,815" fill="none" stroke="#0A0AE6" stroke-width="3" stroke-linecap="square"/>
<path d="M791.0,815 L808.0,815 L799.5,823.5 Z" fill="none" stroke="#0A0AE6" stroke-width="3" stroke-linejoin="miter"/>
<path d="M707.5,807 L707.5,853.5 L664,853.5" fill="none" stroke="#0A0AE6" stroke-width="3" stroke-linecap="square"/>
<path d="M371.5,836.5 L371.5,818 L378.5,810 L385.5,818 L385.5,836.5 Z" fill="none" stroke="#0A0AE6" stroke-width="3" stroke-linejoin="miter"/>
<text transform="translate(382.5,834.7) rotate(-90)" font-size="12" font-weight="bold" fill="#000" textLength="12.6" lengthAdjust="spacingAndGlyphs">V5</text>
<path d="M378.5,836.5 L378.5,843" fill="none" stroke="#0A0AE6" stroke-width="3" stroke-linecap="square"/>
<circle cx="377.5" cy="856.5" r="14.2" fill="none" stroke="#14148C" stroke-width="3"/>
<path d="M372.5,847.5 H382.5 M377.5,843.5 V852.5" fill="none" stroke="#14148C" stroke-width="3" stroke-linecap="butt" stroke-linejoin="miter"/>
<path d="M372.5,867.0 H382.5" fill="none" stroke="#14148C" stroke-width="3" stroke-linecap="butt" stroke-linejoin="miter"/>
<path d="M378,870 L378,876" fill="none" stroke="#0A0AE6" stroke-width="3" stroke-linecap="square"/>
<path d="M369.5,876 L386.5,876 L378,884.5 Z" fill="none" stroke="#0A0AE6" stroke-width="3" stroke-linejoin="miter"/>
<rect x="585" y="845.5" width="91.5" height="60.5" fill="#FAF5B8" stroke="#14148C" stroke-width="3"/>
<path d="M585,853.5 H604.5 V868.5" fill="none" stroke="#14148C" stroke-width="3" stroke-linecap="butt" stroke-linejoin="miter"/>
<path d="M598,869.0 H611 L604.5,876.5 Z" fill="none" stroke="#14148C" stroke-width="3" stroke-linejoin="miter"/>
<path d="M595.5,879.0 H613.5 M604.5,878.5 V898.0 H585" fill="none" stroke="#14148C" stroke-width="3" stroke-linecap="butt" stroke-linejoin="miter"/>
<path d="M618,870.5 C621,875.5 627,874.5 629,867.5 C631,861.5 637,860.5 641,866.5" fill="none" stroke="#14148C" stroke-width="2.5" stroke-linecap="butt" stroke-linejoin="miter"/>
<path d="M636,862.5 L643,863.5 L641,870.5 Z" fill="#14148C" stroke="#14148C" stroke-width="2"/>
<path d="M648.5,858.5 V876.5" fill="none" stroke="#14148C" stroke-width="4" stroke-linecap="butt" stroke-linejoin="miter"/>
<path d="M647.5,876.5 V898.0 H676.5" fill="none" stroke="#14148C" stroke-width="3" stroke-linecap="butt" stroke-linejoin="miter"/>
<path d="M650,867.5 L664,853.5 H676.5" fill="none" stroke="#14148C" stroke-width="3" stroke-linecap="butt" stroke-linejoin="miter"/>
<path d="M650,870.5 L664,883.5 H676.5" fill="none" stroke="#14148C" stroke-width="3" stroke-linecap="butt" stroke-linejoin="miter"/>
<path d="M658,877.5 L664,883.5 L656.5,881.0 Z" fill="#FFF8E0" stroke="#14148C" stroke-width="2"/>
<circle cx="677" cy="898.0" r="2.5" fill="none" stroke="#0A0AE6" stroke-width="1.5"/>
<path d="M500.5,1006 L500.5,853.5 L535,853.5" fill="none" stroke="#0A0AE6" stroke-width="3" stroke-linecap="square"/>
<path d="M535,853.5 L540,846.0 L548,861.0 L556,846.0 L564,861.0 L568,853.5" fill="none" stroke="#14148C" stroke-width="3" stroke-linecap="butt" stroke-linejoin="miter"/>
<path d="M568,853.5 L585,853.5" fill="none" stroke="#0A0AE6" stroke-width="3" stroke-linecap="square"/>
<path d="M585,898 L570,898 L570,908" fill="none" stroke="#0A0AE6" stroke-width="3" stroke-linecap="square"/>
<path d="M561.5,908 L578.5,908 L570,916.5 Z" fill="none" stroke="#0A0AE6" stroke-width="3" stroke-linejoin="miter"/>
<path d="M676.5,884 L707.5,884 L707.5,899" fill="none" stroke="#0A0AE6" stroke-width="3" stroke-linecap="square"/>
<path d="M699.0,899 L716.0,899 L707.5,907.5 Z" fill="none" stroke="#0A0AE6" stroke-width="3" stroke-linejoin="miter"/>
<rect x="585" y="998.5" width="91.5" height="60.5" fill="#FAF5B8" stroke="#14148C" stroke-width="3"/>
<path d="M585,1006.5 H604.5 V1021.5" fill="none" stroke="#14148C" stroke-width="3" stroke-linecap="butt" stroke-linejoin="miter"/>
<path d="M598,1022.0 H611 L604.5,1029.5 Z" fill="none" stroke="#14148C" stroke-width="3" stroke-linejoin="miter"/>
<path d="M595.5,1032.0 H613.5 M604.5,1031.5 V1051.0 H585" fill="none" stroke="#14148C" stroke-width="3" stroke-linecap="butt" stroke-linejoin="miter"/>
<path d="M618,1023.5 C621,1028.5 627,1027.5 629,1020.5 C631,1014.5 637,1013.5 641,1019.5" fill="none" stroke="#14148C" stroke-width="2.5" stroke-linecap="butt" stroke-linejoin="miter"/>
<path d="M636,1015.5 L643,1016.5 L641,1023.5 Z" fill="#14148C" stroke="#14148C" stroke-width="2"/>
<path d="M648.5,1011.5 V1029.5" fill="none" stroke="#14148C" stroke-width="4" stroke-linecap="butt" stroke-linejoin="miter"/>
<path d="M647.5,1029.5 V1051.0 H676.5" fill="none" stroke="#14148C" stroke-width="3" stroke-linecap="butt" stroke-linejoin="miter"/>
<path d="M650,1020.5 L664,1006.5 H676.5" fill="none" stroke="#14148C" stroke-width="3" stroke-linecap="butt" stroke-linejoin="miter"/>
<path d="M650,1023.5 L664,1036.5 H676.5" fill="none" stroke="#14148C" stroke-width="3" stroke-linecap="butt" stroke-linejoin="miter"/>
<path d="M658,1030.5 L664,1036.5 L656.5,1034.0 Z" fill="#FFF8E0" stroke="#14148C" stroke-width="2"/>
<circle cx="677" cy="1051.0" r="2.5" fill="none" stroke="#0A0AE6" stroke-width="1.5"/>
<path d="M431.5,1006 L535,1006" fill="none" stroke="#0A0AE6" stroke-width="3" stroke-linecap="square"/>
<path d="M535,1006 L540,998.5 L548,1013.5 L556,998.5 L564,1013.5 L568,1006" fill="none" stroke="#14148C" stroke-width="3" stroke-linecap="butt" stroke-linejoin="miter"/>
<path d="M568,1006 L585,1006" fill="none" stroke="#0A0AE6" stroke-width="3" stroke-linecap="square"/>
<rect x="428.0" y="1002.5" width="7" height="7" fill="#0A0AE6"/>
<rect x="497.0" y="1002.5" width="7" height="7" fill="#0A0AE6"/>
<path d="M585,1051 L569.5,1051 L569.5,1060" fill="none" stroke="#0A0AE6" stroke-width="3" stroke-linecap="square"/>
<path d="M561.0,1060 L578.0,1060 L569.5,1068.5 Z" fill="none" stroke="#0A0AE6" stroke-width="3" stroke-linejoin="miter"/>
<path d="M676.5,1006.5 L799.5,1006.5" fill="none" stroke="#0A0AE6" stroke-width="3" stroke-linecap="square"/>
<rect x="704.0" y="1003.0" width="7" height="7" fill="#0A0AE6"/>
<rect x="796.0" y="1003.0" width="7" height="7" fill="#0A0AE6"/>
<path d="M676.5,1037 L707,1037 L707,1052" fill="none" stroke="#0A0AE6" stroke-width="3" stroke-linecap="square"/>
<path d="M698.5,1052 L715.5,1052 L707,1060.5 Z" fill="none" stroke="#0A0AE6" stroke-width="3" stroke-linejoin="miter"/>
<path d="M700.5,951 L700.5,934 L707.5,926 L714.5,934 L714.5,951 Z" fill="none" stroke="#0A0AE6" stroke-width="3" stroke-linejoin="miter"/>
<text transform="translate(711.5,949.2) rotate(-90)" font-size="12" font-weight="bold" fill="#000" textLength="12.6" lengthAdjust="spacingAndGlyphs">V5</text>
<path d="M707.5,951 L707.5,956" fill="none" stroke="#0A0AE6" stroke-width="3" stroke-linecap="square"/>
<path d="M707.5,956 L715.0,961 L700.0,969 L715.0,977 L700.0,985 L707.5,989" fill="none" stroke="#14148C" stroke-width="3" stroke-linecap="butt" stroke-linejoin="miter"/>
<path d="M707.5,989 L707.5,1006" fill="none" stroke="#0A0AE6" stroke-width="3" stroke-linecap="square"/>
<path d="M792.5,982.5 L792.5,957.5 L799.5,949.5 L806.5,957.5 L806.5,982.5 Z" fill="none" stroke="#0A0AE6" stroke-width="3" stroke-linejoin="miter"/>
<text transform="translate(803.5,980.7) rotate(-90)" font-size="12.5" font-weight="bold" fill="#000" textLength="27" lengthAdjust="spacingAndGlyphs">OUT</text>
<path d="M799.5,982.5 L799.5,1016" fill="none" stroke="#0A0AE6" stroke-width="3" stroke-linecap="square"/>
<path d="M799.5,1016 L807.0,1021 L792.0,1029 L807.0,1037 L792.0,1045 L799.5,1049" fill="none" stroke="#14148C" stroke-width="3" stroke-linecap="butt" stroke-linejoin="miter"/>
<path d="M799.5,1049 L799.5,1060" fill="none" stroke="#0A0AE6" stroke-width="3" stroke-linecap="square"/>
<path d="M791.0,1060 L808.0,1060 L799.5,1068.5 Z" fill="none" stroke="#0A0AE6" stroke-width="3" stroke-linejoin="miter"/>
<path d="M424.5,998 L424.5,983.5 L431.5,975.5 L438.5,983.5 L438.5,998 Z" fill="none" stroke="#0A0AE6" stroke-width="3" stroke-linejoin="miter"/>
<text transform="translate(435.5,996.2) rotate(-90)" font-size="12.5" font-weight="bold" fill="#000" textLength="12" lengthAdjust="spacingAndGlyphs">IN</text>
<path d="M431.5,998 L431.5,1018" fill="none" stroke="#0A0AE6" stroke-width="3" stroke-linecap="square"/>
<circle cx="431.5" cy="1032" r="14.2" fill="none" stroke="#14148C" stroke-width="3"/>
<path d="M426.5,1023 H436.5 M431.5,1019 V1028" fill="none" stroke="#14148C" stroke-width="3" stroke-linecap="butt" stroke-linejoin="miter"/>
<path d="M426.5,1042.5 H436.5" fill="none" stroke="#14148C" stroke-width="3" stroke-linecap="butt" stroke-linejoin="miter"/>
<path d="M431.5,1045 L431.5,1053" fill="none" stroke="#0A0AE6" stroke-width="3" stroke-linecap="square"/>
<path d="M423.0,1053 L440.0,1053 L431.5,1061.5 Z" fill="none" stroke="#0A0AE6" stroke-width="3" stroke-linejoin="miter"/>
<text x="600.5" y="744" font-size="10" font-weight="bold" fill="#22722A">R5</text>
<text x="600.5" y="761" font-size="10" font-weight="bold" fill="#22722A">5k</text>
<text x="600.5" y="797" font-size="10" font-weight="bold" fill="#22722A">R6</text>
<text x="600.5" y="814" font-size="10" font-weight="bold" fill="#22722A">3k</text>
<text x="573.5" y="792" font-size="10" font-weight="bold" fill="#22722A">C1</text>
<text x="534.5" y="792.5" font-size="10" font-weight="bold" fill="#22722A" textLength="24" lengthAdjust="spacingAndGlyphs">100n</text>
<text x="716" y="730" font-size="10" font-weight="bold" fill="#22722A">R4</text>
<text x="716.5" y="748" font-size="10" font-weight="bold" fill="#22722A">300</text>
<text x="695.5" y="780" font-size="10" font-weight="bold" fill="#22722A">Q3</text>
<text x="695.5" y="793" font-size="10" font-weight="bold" fill="#22722A" textLength="39" lengthAdjust="spacingAndGlyphs">BC847C</text>
<text x="808.5" y="784" font-size="10" font-weight="bold" fill="#22722A" textLength="28.5" lengthAdjust="spacingAndGlyphs">Rout1</text>
<text x="808.5" y="801.5" font-size="10" font-weight="bold" fill="#22722A">10k</text>
<text x="543.5" y="842.5" font-size="10" font-weight="bold" fill="#22722A">R3</text>
<text x="541.5" y="871" font-size="10" font-weight="bold" fill="#22722A">500</text>
<text x="623.5" y="841.5" font-size="10" font-weight="bold" fill="#22722A">U3</text>
<text x="608.5" y="918.5" font-size="10" font-weight="bold" fill="#22722A" textLength="43.5" lengthAdjust="spacingAndGlyphs">CNY17-3</text>
<text x="389" y="841" font-size="10" font-weight="bold" fill="#22722A">V1</text>
<text x="389.5" y="883" font-size="10" font-weight="bold" fill="#22722A">5</text>
<text x="374.5" y="926" font-size="10" font-weight="bold" fill="#8E2222" textLength="80" lengthAdjust="spacingAndGlyphs">.net I(Rout) Vin</text>
<text x="382.5" y="1018.5" font-size="10" font-weight="bold" fill="#22722A">Vin</text>
<text x="381.5" y="1045.5" font-size="10" font-weight="bold" fill="#22722A" textLength="23.5" lengthAdjust="spacingAndGlyphs">AC 1</text>
<text x="382.5" y="1079.5" font-size="10" font-weight="bold" fill="#22722A" textLength="148" lengthAdjust="spacingAndGlyphs">PULSE(5 0 0 10n 10n 2.5μ 5μ)</text>
<text x="382.5" y="1105.5" font-size="10" font-weight="bold" fill="#8E2222" textLength="99" lengthAdjust="spacingAndGlyphs">.ac oct 1k 1 10meg</text>
<text x="543" y="995" font-size="10" font-weight="bold" fill="#22722A">R1</text>
<text x="541.5" y="1024" font-size="10" font-weight="bold" fill="#22722A">500</text>
<text x="623" y="995" font-size="10" font-weight="bold" fill="#22722A">U2</text>
<text x="608.5" y="1071.5" font-size="10" font-weight="bold" fill="#22722A" textLength="43" lengthAdjust="spacingAndGlyphs">CNY17-3</text>
<text x="684" y="967" font-size="10" font-weight="bold" fill="#22722A">R2</text>
<text x="679.5" y="983" font-size="10" font-weight="bold" fill="#22722A">300</text>
<text x="808.5" y="1029.5" font-size="10" font-weight="bold" fill="#22722A" textLength="23.5" lengthAdjust="spacingAndGlyphs">Rout</text>
<text x="808.5" y="1046.5" font-size="10" font-weight="bold" fill="#22722A">10k</text>
<g transform="translate(18,9)"><path d="M0.5,0.5 H10 L13.5,4 V14.5 H0.5 Z" fill="#F4FCEC" stroke="#127812" stroke-width="1.2"/><path d="M10,0.5 V4 H13.5" fill="none" stroke="#127812" stroke-width="1"/><path d="M2,10 L6,6 H8 L7,5 L11,6 L9,8 H7 L8,9 Z M3,11 L5,12 L9,8" fill="#E01818" stroke="#E01818" stroke-width="1"/></g>
<g transform="translate(41,9)"><path d="M1,4 H5 L6,5 H10 V12 H1 Z" fill="#E8F070" stroke="#127812" stroke-width="1.2"/><path d="M1,12 L4,7 H15 L11,12 Z" fill="#6A9A20" stroke="#127812" stroke-width="1.2"/><path d="M8,3 Q11,-1 14,3" fill="none" stroke="#127812" stroke-width="1.3"/><path d="M12,3 H15 V0" fill="none" stroke="#127812" stroke-width="1"/></g>
<rect x="63" y="5" width="1" height="23" fill="#EEDC84"/><rect x="64" y="5" width="1" height="23" fill="#FFF9DC"/>
<rect x="94" y="5" width="1" height="23" fill="#EEDC84"/><rect x="95" y="5" width="1" height="23" fill="#FFF9DC"/>
<rect x="125" y="5" width="1" height="23" fill="#EEDC84"/><rect x="126" y="5" width="1" height="23" fill="#FFF9DC"/>
<rect x="179" y="5" width="1" height="23" fill="#EEDC84"/><rect x="180" y="5" width="1" height="23" fill="#FFF9DC"/>
<rect x="279" y="5" width="1" height="23" fill="#EEDC84"/><rect x="280" y="5" width="1" height="23" fill="#FFF9DC"/>
<rect x="333" y="5" width="1" height="23" fill="#EEDC84"/><rect x="334" y="5" width="1" height="23" fill="#FFF9DC"/>
<rect x="410" y="5" width="1" height="23" fill="#EEDC84"/><rect x="411" y="5" width="1" height="23" fill="#FFF9DC"/>
<rect x="510" y="5" width="1" height="23" fill="#EEDC84"/><rect x="511" y="5" width="1" height="23" fill="#FFF9DC"/>
<rect x="564" y="5" width="1" height="23" fill="#EEDC84"/><rect x="565" y="5" width="1" height="23" fill="#FFF9DC"/>
<rect x="943" y="5" width="1" height="23" fill="#EEDC84"/><rect x="944" y="5" width="1" height="23" fill="#FFF9DC"/>
<g transform="translate(72,9)"><path d="M0.5,0.5 H13.5 V13.5 H1.5 L0.5,12.5 Z" fill="#2E8A2E" stroke="#127812" stroke-width="1"/><rect x="3" y="1" width="8" height="5.5" fill="#E8F8D8"/><rect x="9" y="9" width="2.5" height="3.5" fill="#E8F8D8"/></g>
<g transform="translate(102,9)"><path d="M1,3 Q3,0 8,0.5 Q13,1 15,6 L14,7 Q12,4 10,4 V6 H5 V4 Q3,5 1,5 Z" fill="#D6F2A8" stroke="#127812" stroke-width="1.2"/><rect x="6" y="7" width="4" height="8" fill="#000078"/><rect x="5" y="12" width="6" height="3" fill="#000078"/></g>
<g transform="translate(133,9)"><path d="M1,12 L5,11 L8,7 L10,3 L13,1 L14,2 L11,4 L9,8 L11,10 L14,9 M9,8 L7,12 L9,15 M10,3 L7,4 L5,6" fill="none" stroke="#127812" stroke-width="1.6" stroke-linejoin="round"/><path d="M3,2 L6,4 M2,5 L5,6" stroke="#F0C890" stroke-width="1"/></g>
<g transform="translate(157,9)"><path d="M5,15 L2,10 Q1,8 3,9 L5,10 V2 Q6,1 7,2 V7 V1 Q8,0 9,1 V7 V2 Q10,1 11,2 V8 V4 Q12,3 13,4 V11 Q12,15 10,15 Z" fill="#FAF0C8" stroke="#E6D870" stroke-width="1.2"/></g>
<g transform="translate(188,9)"><circle cx="6" cy="6" r="5" fill="#D6F2A8" fill-opacity="0.5" stroke="#127812" stroke-width="1.4"/><path d="M9.5,9.5 L14.5,14.5" stroke="#127812" stroke-width="2.6" stroke-linecap="round"/><path d="M3,6 H9 M6,3 V9" stroke="#127812" stroke-width="1.6"/></g>
<g transform="translate(210,9)"><circle cx="6" cy="6" r="5" fill="none" fill-opacity="0.5" stroke="#E6D870" stroke-width="1.4"/><path d="M9.5,9.5 L14.5,14.5" stroke="#E6D870" stroke-width="2.6" stroke-linecap="round"/></g>
<g transform="translate(233,9)"><circle cx="6" cy="6" r="5" fill="#D6F2A8" fill-opacity="0.5" stroke="#127812" stroke-width="1.4"/><path d="M9.5,9.5 L14.5,14.5" stroke="#127812" stroke-width="2.6" stroke-linecap="round"/><path d="M3,6 H9" stroke="#127812" stroke-width="1.6"/></g>
<g transform="translate(255,9)"><circle cx="6" cy="6" r="5" fill="#D6F2A8" fill-opacity="0.5" stroke="#127812" stroke-width="1.4"/><path d="M9.5,9.5 L14.5,14.5" stroke="#127812" stroke-width="2.6" stroke-linecap="round"/><path d="M0,0 L12,13 M12,1 L1,13" stroke="#E01818" stroke-width="1.6"/></g>
<g transform="translate(286,9)"><path d="M1,1 V15 H16" fill="none" stroke="#127812" stroke-width="1.2"/><path d="M2,5 L5,1 L8,4 L11,1 L15,5" fill="none" stroke="#303030" stroke-width="1.2"/><path d="M2,8 L5,7 L9,9 L15,8" fill="none" stroke="#E01818" stroke-width="1.3"/><path d="M2,11 H5 L7,10 L10,11 H15" fill="none" stroke="#000078" stroke-width="1.3"/><path d="M3,15 V16 M6,15 V16 M9,15 V16 M12,15 V16" stroke="#127812" stroke-width="1"/></g>
<g transform="translate(310,9)"><path d="M1,1 V15 H16 M4,12 V5 L9,2 L13,4 V12" fill="none" stroke="#E6D870" stroke-width="1.1"/><path d="M13,2 V13 M11,4 L13,2 L15,4" fill="none" stroke="#E6D870" stroke-width="1"/></g>
<g transform="translate(341,9)"><rect x="0.5" y="0.5" width="15" height="7" fill="#FFF8E0" stroke="#000078" stroke-width="1.4"/><rect x="1" y="1" width="14" height="2" fill="#000078"/><rect x="0.5" y="8.5" width="15" height="7" fill="#FFF8E0" stroke="#000078" stroke-width="1.4"/><rect x="1" y="9" width="14" height="2" fill="#000078"/></g>
<g transform="translate(363,9)"><rect x="0.5" y="0.5" width="10" height="7" fill="#FFF8E0" stroke="#000078" stroke-width="1.3"/><rect x="1" y="1" width="9" height="2" fill="#000078"/><rect x="3.5" y="4.5" width="10" height="7" fill="#FFF8E0" stroke="#000078" stroke-width="1.3"/><rect x="4" y="5" width="9" height="2" fill="#000078"/><rect x="6.5" y="8.5" width="10" height="7" fill="#FFF8E0" stroke="#000078" stroke-width="1.3"/><rect x="7" y="9" width="9" height="2" fill="#000078"/></g>
<g transform="translate(386,9)"><rect x="0.5" y="0.5" width="10" height="7" fill="#FFF8E0" stroke="#000078" stroke-width="1.3"/><rect x="1" y="1" width="9" height="2" fill="#000078"/><rect x="3.5" y="4.5" width="10" height="7" fill="#FFF8E0" stroke="#000078" stroke-width="1.3"/><rect x="4" y="5" width="9" height="2" fill="#000078"/><rect x="6.5" y="8.5" width="10" height="7" fill="#FFF8E0" stroke="#000078" stroke-width="1.3"/><rect x="7" y="9" width="9" height="2" fill="#000078"/><path d="M16,5 L12,1 M12,1 H15 M12,1 V4" stroke="#127812" stroke-width="1.2" fill="none"/><rect x="8" y="12" width="5" height="2" fill="#127812"/></g>
<g transform="translate(421,9)"><path d="M2,0 L7,9 M9,0 L4,9" stroke="#127812" stroke-width="1.2"/><circle cx="3" cy="12" r="2.3" fill="none" stroke="#000078" stroke-width="1.3"/><circle cx="8.5" cy="12" r="2.3" fill="none" stroke="#000078" stroke-width="1.3"/></g>
<g transform="translate(441,9)"><path d="M0.5,0.5 H6 L8,2.5 V10.5 H0.5 Z" fill="#F0FCE0" stroke="#127812" stroke-width="1.2"/><path d="M2,4 H6 M2,6 H6 M2,8 H6" stroke="#127812" stroke-width="1"/><path d="M6.5,5.5 H12 L15.5,9 V15.5 H6.5 Z" fill="#F0F4FF" stroke="#000078" stroke-width="1.2"/><path d="M8,10 H14 M8,12 H14" stroke="#127812" stroke-width="1"/></g>
<g transform="translate(464,9)"><rect x="0.5" y="1.5" width="11" height="13" fill="#EAD870" stroke="#E6D870" stroke-width="1"/><rect x="3" y="0" width="6" height="3" fill="#D8C860"/><rect x="6.5" y="7.5" width="9" height="8" fill="#F2E8A0" stroke="#E6D870" stroke-width="1"/></g>
<g transform="translate(488,9)"><path d="M1,14 V7 L3,1 H6 V14 Z M9,14 V1 H12 L15,7 V14 Z M6,6 H9 V10 H6 Z" fill="#127812"/><path d="M2,9 V13 M10,9 V13" stroke="#D6F2A8" stroke-width="1"/></g>
<g transform="translate(519,9)"><path d="M3,1 H11 L13,3 V7 H3 Z" fill="#FFFDF0" stroke="#127812" stroke-width="1.2"/><path d="M0.5,7 Q0.5,5.5 2,5.5 H15 Q16,5.5 16,7 V13.5 H0.5 Z" fill="#E8ECA8" stroke="#127812" stroke-width="1.3"/><path d="M2,14.5 H15" stroke="#127812" stroke-width="1"/></g>
<g transform="translate(541,9)"><path d="M4,0.5 H14 L15,3 V6 H3 Z" fill="#FFFDF0" stroke="#127812" stroke-width="1.2"/><path d="M5,2 H12 M5,4 H12" stroke="#127812" stroke-width="0.8"/><path d="M0.5,7 Q0.5,5.5 2,5.5 H15 Q16.5,5.5 16.5,7 V13.5 H0.5 Z" fill="#E0E8A0" stroke="#127812" stroke-width="1.3"/><path d="M1,10.5 H16" stroke="#127812" stroke-width="1"/><path d="M2,14.5 H15" stroke="#127812" stroke-width="1"/></g>
<g transform="translate(574,9)"><path d="M1,13 L2,9 L9,1 L11,3 L4,11 Z" fill="#F0E020" stroke="#127812" stroke-width="1.2"/><path d="M1,14 H14" stroke="#000078" stroke-width="1.3"/></g>
<g transform="translate(595,9)"><path d="M7.5,0 V6 M0.5,6 H14.5 L7.5,13 Z" fill="#D6F2A8" stroke="#127812" stroke-width="1.3"/></g>
<g transform="translate(618,9)"><rect x="0.5" y="0.5" width="14" height="9" rx="1.5" fill="#D6F2A8" stroke="#127812" stroke-width="1.3"/><path d="M7.5,10 V15" stroke="#127812" stroke-width="1.3"/><text x="7.5" y="8" font-size="8" font-weight="bold" fill="#127812" text-anchor="middle">A</text></g>
<g transform="translate(643,9)"><path d="M5,0 L10,4 L1,8 L10,11 L5,15" fill="none" stroke="#127812" stroke-width="1.2"/></g>
<g transform="translate(666,9)"><path d="M5.5,0 V5 M0,5.5 H11 M0,9 H11 M5.5,9 V15" fill="none" stroke="#127812" stroke-width="1.3"/></g>
<g transform="translate(691,9)"><path d="M0.5,1 Q5,1 5,4.5 Q5,7.5 1,7.5 Q5,7.5 5,11 Q5,14 0.5,14" fill="none" stroke="#127812" stroke-width="1.3"/></g>
<g transform="translate(711,9)"><path d="M7.5,0 V15 M0,4 H15 L7.5,11 Z M0,11 H15" fill="#D6F2A8" stroke="#127812" stroke-width="1.3"/></g>
<g transform="translate(733,9)"><path d="M3,2.5 H8 Q12.5,2.5 12.5,7.5 Q12.5,12.5 8,12.5 H3 Z" fill="#D6F2A8" stroke="#127812" stroke-width="1.3"/><path d="M0,5 H3 M0,10 H3 M12.5,7.5 H16" stroke="#127812" stroke-width="1.3"/></g>
<g transform="translate(756,9)"><path d="M6,15 L1,9 Q0,7 2,7 L4,9 L3,3 Q3,1 5,2 L7,6 V1 Q8,0 9,1 L10,6 L12,2 Q14,2 13,4 L12,7 L14,5 Q16,6 15,8 L11,15 Z" fill="#F4FCEC" stroke="#127812" stroke-width="1.2"/></g>
<g transform="translate(780,9)"><path d="M5,14 L1,9 Q0,7 2,7 L3,8 V4 Q3,2 5,3 V2 Q6,0 8,2 Q9,0 11,3 Q13,3 13,5 V9 L10,14 Z" fill="#F4FCEC" stroke="#127812" stroke-width="1.2"/></g>
<g transform="translate(803,9)"><path d="M3,4 Q6,1 10,2 Q14,4 13,9 Q11,13 7,13" fill="none" stroke="#127812" stroke-width="1.4"/><path d="M1,3 L3,8 L7,5" fill="none" stroke="#127812" stroke-width="1.4"/></g>
<g transform="translate(826,9)"><path d="M12,4 Q9,1 5,2 Q1,4 2,9 Q4,13 8,13" fill="none" stroke="#E6D870" stroke-width="1.4"/><path d="M14,3 L12,8 L8,5" fill="none" stroke="#E6D870" stroke-width="1.4"/></g>
<g transform="translate(848,9)"><path d="M1,15 V6 H5 M1,10 H4 M1,15 H5 M7,15 V9 H15 V15 M11,9 V15 M3,6 Q5,2 10,2 L13,5" fill="none" stroke="#E6D870" stroke-width="1.3"/></g>
<g transform="translate(870,9)"><path d="M1,15 V6 H5 M1,10 H4 M1,15 H5 M13,15 V6 H9 M13,10 H10 M13,15 H9 M3,6 V3 H11 L13,5" fill="none" stroke="#E6D870" stroke-width="1.3"/></g>
<text x="894" y="22" font-family="Liberation Serif" font-style="italic" font-weight="bold" font-size="14" fill="#127812">Aa</text>
<text x="917" y="20" font-family="Liberation Sans" font-size="13" fill="#127812">.op</text>
</svg></body></html>
